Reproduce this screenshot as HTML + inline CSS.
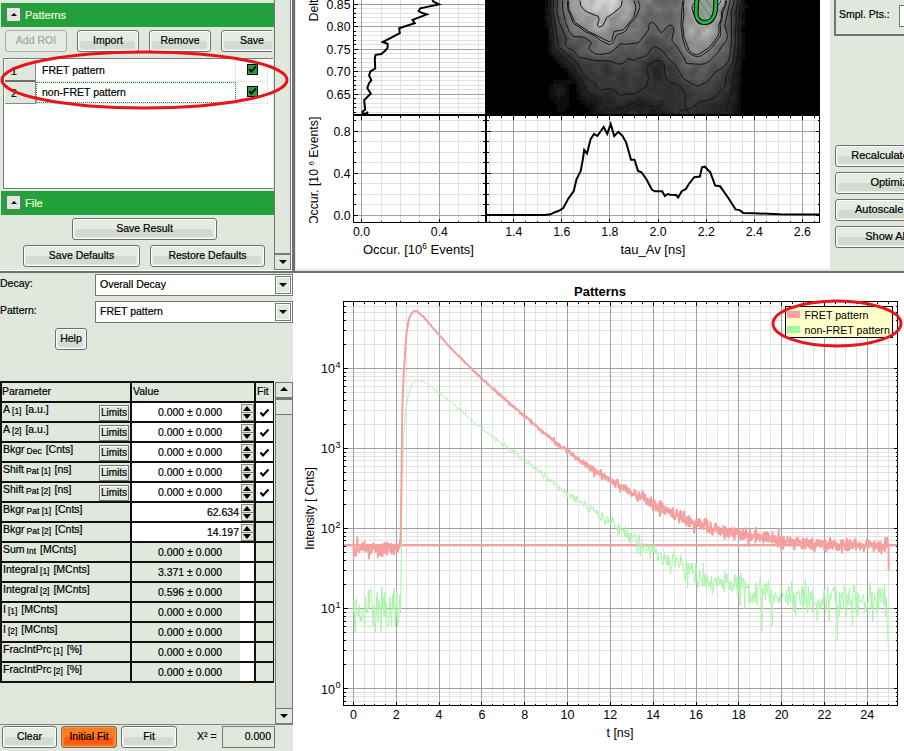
<!DOCTYPE html><html><head><meta charset="utf-8"><style>
*{margin:0;padding:0;box-sizing:border-box}
html,body{width:904px;height:751px;overflow:hidden;background:#fff;font-family:"Liberation Sans",sans-serif;font-size:10.5px;color:#000;-webkit-text-stroke-width:0.2px}
svg text{-webkit-text-stroke-width:0.1px}
.t{position:absolute;white-space:nowrap;line-height:12px}
.btn{position:absolute;border:1px solid #6f6f6f;border-radius:3px;background:#e4ebe2;text-align:center;overflow:hidden;white-space:nowrap;box-shadow:inset 0 0 0 1px #fff}
.btn::before{content:"";position:absolute;left:2px;right:3px;top:48%;bottom:2px;background:#d3dbd1;border-radius:2px}
.btn span{position:relative}
.btn.dis{border-color:#a9b0a8;color:#a0a8a0;box-shadow:none}
.btn.dis::before{display:none}
.btn.or{background:#ff7a1c;box-shadow:inset 0 0 0 1px #ff9a3a}
.btn.or::before{background:#ff5a12}
.sq{position:absolute;border:1px solid #777;background:#e0e8de;box-shadow:inset 1px 1px 0 #fff}
sub{font-size:8.5px;vertical-align:-1px;margin:0 1px 0 2px;line-height:0}
.hdr{position:absolute;background:#21a03c;color:#f4f6b4;font-size:11px}
</style></head><body><div style="position:absolute;left:0px;top:0px;width:292px;height:271px;background:#e0e8de"></div>
<div class="hdr" style="left:1px;top:3px;width:273px;height:24px"></div>
<div style="position:absolute;left:6px;top:7px;width:15px;height:15px;background:#e0e8de;border:1px solid #6f6f6f;border-radius:2px"></div>
<div style="position:absolute;left:10.5px;top:12.5px;width:0;height:0;border-left:3px solid transparent;border-right:3px solid transparent;border-bottom:3px solid #000"></div>
<div class="t" style="left:25px;top:9px;color:#f2f8d6;font-size:11px">Patterns</div>
<div class="btn dis" style="left:5px;top:30px;width:62px;height:22px;line-height:18px;"><span>Add ROI</span></div>
<div class="btn" style="left:77px;top:30px;width:62px;height:22px;line-height:18px;"><span>Import</span></div>
<div class="btn" style="left:149px;top:30px;width:62px;height:22px;line-height:18px;"><span>Remove</span></div>
<div style="position:absolute;left:0;top:0;width:272px;height:60px;overflow:hidden">
<div class="btn" style="left:221px;top:30px;width:62px;height:22px;line-height:18px;"><span>Save</span></div>
</div>
<div style="position:absolute;left:3px;top:58px;width:270px;height:131px;background:#fff;border-top:1px solid #7a7a7a;border-left:1px solid #7a7a7a;border-bottom:1px solid #7a7a7a"></div>
<div style="position:absolute;left:5px;top:60px;width:31px;height:22px;background:#e0e8de;border-right:1px solid #8a8a8a;border-bottom:2px solid #6e6e6e"></div>
<div style="position:absolute;left:5px;top:82px;width:31px;height:22px;background:#e0e8de;border-right:1px solid #8a8a8a;border-bottom:1px solid #8a8a8a"></div>
<div class="t" style="left:11px;top:65px;">1</div>
<div class="t" style="left:11px;top:87px;">2</div>
<div style="position:absolute;left:36px;top:81px;width:232px;height:1px;background:#e6e6e6"></div>
<div style="position:absolute;left:36px;top:103px;width:232px;height:1px;background:#e6e6e6"></div>
<div style="position:absolute;left:235px;top:60px;width:1px;height:44px;background:#e6e6e6"></div>
<div style="position:absolute;left:267px;top:60px;width:1px;height:44px;background:#e6e6e6"></div>
<div style="position:absolute;left:36px;top:82px;width:200px;height:21px;border:1px dotted #1a9a2a"></div>
<div class="t" style="left:42px;top:64px;font-size:10.5px">FRET pattern</div>
<div class="t" style="left:42px;top:86px;font-size:10.5px">non-FRET pattern</div>
<div style="position:absolute;left:247px;top:64px;width:11px;height:11px;background:#21a03c;border:1px solid #000"></div>
<svg style="position:absolute;left:247px;top:64px" width="11" height="11"><path d="M2.2 5.2 L4.3 7.6 L8.8 2.6" stroke="#000" stroke-width="1.8" fill="none"/></svg>
<div style="position:absolute;left:247px;top:86px;width:11px;height:11px;background:#21a03c;border:1px solid #000"></div>
<svg style="position:absolute;left:247px;top:86px" width="11" height="11"><path d="M2.2 5.2 L4.3 7.6 L8.8 2.6" stroke="#000" stroke-width="1.8" fill="none"/></svg>
<div class="hdr" style="left:1px;top:191px;width:273px;height:24px"></div>
<div style="position:absolute;left:6px;top:195px;width:15px;height:15px;background:#e0e8de;border:1px solid #6f6f6f;border-radius:2px"></div>
<div style="position:absolute;left:10.5px;top:200.5px;width:0;height:0;border-left:3px solid transparent;border-right:3px solid transparent;border-bottom:3px solid #000"></div>
<div class="t" style="left:25px;top:197px;color:#f2f8d6;font-size:11px">File</div>
<div class="btn" style="left:72px;top:218px;width:145px;height:22px;line-height:18px;"><span>Save Result</span></div>
<div class="btn" style="left:23px;top:245px;width:117px;height:22px;line-height:18px;"><span>Save Defaults</span></div>
<div class="btn" style="left:150px;top:245px;width:115px;height:22px;line-height:18px;"><span>Restore Defaults</span></div>
<div style="position:absolute;left:274px;top:0px;width:17px;height:271px;background:#e0e8de;border-left:1px solid #777;border-right:1px solid #777"></div>
<div style="position:absolute;left:274px;top:253px;width:17px;height:17px;border:1px solid #777;border-top:2px solid #777"></div>
<div style="position:absolute;left:279px;top:260px;width:0;height:0;border-left:4px solid transparent;border-right:4px solid transparent;border-top:4px solid #000"></div>
<div style="position:absolute;left:291px;top:0px;width:1px;height:272px;background:#fff"></div>
<div style="position:absolute;left:292px;top:0px;width:3px;height:272px;background:#707070"></div>
<div style="position:absolute;left:0px;top:270px;width:292px;height:1px;background:#fff"></div>
<div style="position:absolute;left:0px;top:271px;width:904px;height:2px;background:#707070"></div>
<div style="position:absolute;left:295px;top:0px;width:535px;height:271px;background:#fff;border-left:1px solid #e0e8de;border-bottom:2px solid #e0e8de"></div>
<div style="position:absolute;left:830px;top:0px;width:74px;height:271px;background:#e0e8de"></div>
<div style="position:absolute;left:834px;top:-5px;width:80px;height:41px;border:2px solid #727272"></div>
<div class="t" style="left:839px;top:8px;font-size:10.5px">Smpl. Pts.:</div>
<div style="position:absolute;left:899px;top:5px;width:10px;height:22px;background:#fff;border:1px solid #777"></div>
<div style="position:absolute;left:830px;top:0;width:74px;height:271px;overflow:hidden">
<div class="btn" style="left:5px;top:145px;width:100px;height:22px;line-height:18px;"><span></span></div>
</div>
<div class="t" style="left:851.3px;top:149px;font-size:11px">Recalculate</div>
<div style="position:absolute;left:830px;top:0;width:74px;height:271px;overflow:hidden">
<div class="btn" style="left:5px;top:172px;width:100px;height:22px;line-height:18px;"><span></span></div>
</div>
<div class="t" style="left:870.4px;top:176px;font-size:11px">Optimize</div>
<div style="position:absolute;left:830px;top:0;width:74px;height:271px;overflow:hidden">
<div class="btn" style="left:5px;top:199px;width:100px;height:22px;line-height:18px;"><span></span></div>
</div>
<div class="t" style="left:855px;top:203px;font-size:11px">Autoscale</div>
<div style="position:absolute;left:830px;top:0;width:74px;height:271px;overflow:hidden">
<div class="btn" style="left:5px;top:226px;width:100px;height:22px;line-height:18px;"><span></span></div>
</div>
<div class="t" style="left:865.2px;top:230px;font-size:11px">Show All</div>
<div style="position:absolute;left:0px;top:273px;width:293px;height:478px;background:#e0e8de"></div>
<div class="t" style="left:0px;top:277px;">Decay:</div>
<div class="t" style="left:0px;top:304px;">Pattern:</div>
<div style="position:absolute;left:95px;top:274px;width:198px;height:22px;background:#fff;border:1px solid #777"></div>
<div style="position:absolute;left:275px;top:276px;width:16px;height:18px;background:#e0e8de;border:1px solid #777;box-shadow:inset 1px 1px 0 #fff,inset -1px -1px 0 #fff"></div>
<div style="position:absolute;left:279px;top:283px;width:0;height:0;border-left:4px solid transparent;border-right:4px solid transparent;border-top:4px solid #000"></div>
<div class="t" style="left:100px;top:278px;">Overall Decay</div>
<div style="position:absolute;left:95px;top:301px;width:198px;height:22px;background:#fff;border:1px solid #777"></div>
<div style="position:absolute;left:275px;top:303px;width:16px;height:18px;background:#e0e8de;border:1px solid #777;box-shadow:inset 1px 1px 0 #fff,inset -1px -1px 0 #fff"></div>
<div style="position:absolute;left:279px;top:310px;width:0;height:0;border-left:4px solid transparent;border-right:4px solid transparent;border-top:4px solid #000"></div>
<div class="t" style="left:100px;top:305px;">FRET pattern</div>
<div class="btn" style="left:55px;top:328px;width:32px;height:22px;line-height:18px;"><span>Help</span></div>
<div style="position:absolute;left:0px;top:382px;width:274px;height:20px;background:#e0e8de"></div>
<div class="t" style="left:2px;top:385px;">Parameter</div>
<div class="t" style="left:133px;top:385px;">Value</div>
<div class="t" style="left:257px;top:385px;">Fit</div>
<div style="position:absolute;left:0px;top:402px;width:131px;height:20px;background:#e0e8de"></div>
<div class="t" style="left:3px;top:403px;line-height:13px">A<sub>[1]</sub> [a.u.]</div>
<div class="sq" style="left:99px;top:405px;width:30px;height:16px;line-height:14px;text-align:center;font-size:10px">Limits</div>
<div style="position:absolute;left:131px;top:402px;width:123px;height:20px;background:#fff"></div>
<div class="t" style="left:131px;top:406px;width:118px;text-align:center">0.000 ± 0.000</div>
<div style="position:absolute;left:241px;top:404px;width:13px;height:17px;background:#e0e8de;border:1px solid #888"></div>
<div style="position:absolute;left:243px;top:406px;width:0;height:0;border-left:4px solid transparent;border-right:4px solid transparent;border-bottom:5px solid #000"></div>
<div style="position:absolute;left:243px;top:414px;width:0;height:0;border-left:4px solid transparent;border-right:4px solid transparent;border-top:5px solid #000"></div>
<div style="position:absolute;left:242px;top:412px;width:11px;height:1px;background:#888"></div>
<div style="position:absolute;left:254px;top:402px;width:20px;height:20px;background:#fff"></div>
<svg style="position:absolute;left:259px;top:407px" width="11" height="11"><path d="M1.5 5.5 L4 8.5 L9.5 2.5" stroke="#000" stroke-width="2" fill="none"/></svg>
<div style="position:absolute;left:0px;top:422px;width:131px;height:20px;background:#e0e8de"></div>
<div class="t" style="left:3px;top:423px;line-height:13px">A<sub>[2]</sub> [a.u.]</div>
<div class="sq" style="left:99px;top:425px;width:30px;height:16px;line-height:14px;text-align:center;font-size:10px">Limits</div>
<div style="position:absolute;left:131px;top:422px;width:123px;height:20px;background:#fff"></div>
<div class="t" style="left:131px;top:426px;width:118px;text-align:center">0.000 ± 0.000</div>
<div style="position:absolute;left:241px;top:424px;width:13px;height:17px;background:#e0e8de;border:1px solid #888"></div>
<div style="position:absolute;left:243px;top:426px;width:0;height:0;border-left:4px solid transparent;border-right:4px solid transparent;border-bottom:5px solid #000"></div>
<div style="position:absolute;left:243px;top:434px;width:0;height:0;border-left:4px solid transparent;border-right:4px solid transparent;border-top:5px solid #000"></div>
<div style="position:absolute;left:242px;top:432px;width:11px;height:1px;background:#888"></div>
<div style="position:absolute;left:254px;top:422px;width:20px;height:20px;background:#fff"></div>
<svg style="position:absolute;left:259px;top:427px" width="11" height="11"><path d="M1.5 5.5 L4 8.5 L9.5 2.5" stroke="#000" stroke-width="2" fill="none"/></svg>
<div style="position:absolute;left:0px;top:442px;width:131px;height:20px;background:#e0e8de"></div>
<div class="t" style="left:3px;top:443px;line-height:13px">Bkgr<sub>Dec</sub> [Cnts]</div>
<div class="sq" style="left:99px;top:445px;width:30px;height:16px;line-height:14px;text-align:center;font-size:10px">Limits</div>
<div style="position:absolute;left:131px;top:442px;width:123px;height:20px;background:#fff"></div>
<div class="t" style="left:131px;top:446px;width:118px;text-align:center">0.000 ± 0.000</div>
<div style="position:absolute;left:241px;top:444px;width:13px;height:17px;background:#e0e8de;border:1px solid #888"></div>
<div style="position:absolute;left:243px;top:446px;width:0;height:0;border-left:4px solid transparent;border-right:4px solid transparent;border-bottom:5px solid #000"></div>
<div style="position:absolute;left:243px;top:454px;width:0;height:0;border-left:4px solid transparent;border-right:4px solid transparent;border-top:5px solid #000"></div>
<div style="position:absolute;left:242px;top:452px;width:11px;height:1px;background:#888"></div>
<div style="position:absolute;left:254px;top:442px;width:20px;height:20px;background:#fff"></div>
<svg style="position:absolute;left:259px;top:447px" width="11" height="11"><path d="M1.5 5.5 L4 8.5 L9.5 2.5" stroke="#000" stroke-width="2" fill="none"/></svg>
<div style="position:absolute;left:0px;top:462px;width:131px;height:20px;background:#e0e8de"></div>
<div class="t" style="left:3px;top:463px;line-height:13px">Shift<sub>Pat [1]</sub> [ns]</div>
<div class="sq" style="left:99px;top:465px;width:30px;height:16px;line-height:14px;text-align:center;font-size:10px">Limits</div>
<div style="position:absolute;left:131px;top:462px;width:123px;height:20px;background:#fff"></div>
<div class="t" style="left:131px;top:466px;width:118px;text-align:center">0.000 ± 0.000</div>
<div style="position:absolute;left:241px;top:464px;width:13px;height:17px;background:#e0e8de;border:1px solid #888"></div>
<div style="position:absolute;left:243px;top:466px;width:0;height:0;border-left:4px solid transparent;border-right:4px solid transparent;border-bottom:5px solid #000"></div>
<div style="position:absolute;left:243px;top:474px;width:0;height:0;border-left:4px solid transparent;border-right:4px solid transparent;border-top:5px solid #000"></div>
<div style="position:absolute;left:242px;top:472px;width:11px;height:1px;background:#888"></div>
<div style="position:absolute;left:254px;top:462px;width:20px;height:20px;background:#fff"></div>
<svg style="position:absolute;left:259px;top:467px" width="11" height="11"><path d="M1.5 5.5 L4 8.5 L9.5 2.5" stroke="#000" stroke-width="2" fill="none"/></svg>
<div style="position:absolute;left:0px;top:482px;width:131px;height:20px;background:#e0e8de"></div>
<div class="t" style="left:3px;top:483px;line-height:13px">Shift<sub>Pat [2]</sub> [ns]</div>
<div class="sq" style="left:99px;top:485px;width:30px;height:16px;line-height:14px;text-align:center;font-size:10px">Limits</div>
<div style="position:absolute;left:131px;top:482px;width:123px;height:20px;background:#fff"></div>
<div class="t" style="left:131px;top:486px;width:118px;text-align:center">0.000 ± 0.000</div>
<div style="position:absolute;left:241px;top:484px;width:13px;height:17px;background:#e0e8de;border:1px solid #888"></div>
<div style="position:absolute;left:243px;top:486px;width:0;height:0;border-left:4px solid transparent;border-right:4px solid transparent;border-bottom:5px solid #000"></div>
<div style="position:absolute;left:243px;top:494px;width:0;height:0;border-left:4px solid transparent;border-right:4px solid transparent;border-top:5px solid #000"></div>
<div style="position:absolute;left:242px;top:492px;width:11px;height:1px;background:#888"></div>
<div style="position:absolute;left:254px;top:482px;width:20px;height:20px;background:#fff"></div>
<svg style="position:absolute;left:259px;top:487px" width="11" height="11"><path d="M1.5 5.5 L4 8.5 L9.5 2.5" stroke="#000" stroke-width="2" fill="none"/></svg>
<div style="position:absolute;left:0px;top:502px;width:131px;height:20px;background:#e0e8de"></div>
<div class="t" style="left:3px;top:503px;line-height:13px">Bkgr<sub>Pat [1]</sub> [Cnts]</div>
<div style="position:absolute;left:131px;top:502px;width:123px;height:20px;background:#fff"></div>
<div class="t" style="left:131px;top:506px;width:108px;text-align:right">62.634</div>
<div style="position:absolute;left:241px;top:504px;width:13px;height:17px;background:#e0e8de;border:1px solid #888"></div>
<div style="position:absolute;left:243px;top:506px;width:0;height:0;border-left:4px solid transparent;border-right:4px solid transparent;border-bottom:5px solid #000"></div>
<div style="position:absolute;left:243px;top:514px;width:0;height:0;border-left:4px solid transparent;border-right:4px solid transparent;border-top:5px solid #000"></div>
<div style="position:absolute;left:242px;top:512px;width:11px;height:1px;background:#888"></div>
<div style="position:absolute;left:254px;top:502px;width:20px;height:20px;background:#e0e8de"></div>
<div style="position:absolute;left:0px;top:522px;width:131px;height:20px;background:#e0e8de"></div>
<div class="t" style="left:3px;top:523px;line-height:13px">Bkgr<sub>Pat [2]</sub> [Cnts]</div>
<div style="position:absolute;left:131px;top:522px;width:123px;height:20px;background:#fff"></div>
<div class="t" style="left:131px;top:526px;width:108px;text-align:right">14.197</div>
<div style="position:absolute;left:241px;top:524px;width:13px;height:17px;background:#e0e8de;border:1px solid #888"></div>
<div style="position:absolute;left:243px;top:526px;width:0;height:0;border-left:4px solid transparent;border-right:4px solid transparent;border-bottom:5px solid #000"></div>
<div style="position:absolute;left:243px;top:534px;width:0;height:0;border-left:4px solid transparent;border-right:4px solid transparent;border-top:5px solid #000"></div>
<div style="position:absolute;left:242px;top:532px;width:11px;height:1px;background:#888"></div>
<div style="position:absolute;left:254px;top:522px;width:20px;height:20px;background:#e0e8de"></div>
<div style="position:absolute;left:0px;top:542px;width:131px;height:20px;background:#e0e8de"></div>
<div class="t" style="left:3px;top:543px;line-height:13px">Sum<sub>Int</sub> [MCnts]</div>
<div style="position:absolute;left:131px;top:542px;width:109px;height:20px;background:#e0e8de"></div>
<div style="position:absolute;left:240px;top:542px;width:14px;height:20px;background:#fff"></div>
<div class="t" style="left:131px;top:546px;width:118px;text-align:center">0.000 ± 0.000</div>
<div style="position:absolute;left:254px;top:542px;width:20px;height:20px;background:#e0e8de"></div>
<div style="position:absolute;left:0px;top:562px;width:131px;height:20px;background:#e0e8de"></div>
<div class="t" style="left:3px;top:563px;line-height:13px">Integral<sub>[1]</sub> [MCnts]</div>
<div style="position:absolute;left:131px;top:562px;width:109px;height:20px;background:#e0e8de"></div>
<div style="position:absolute;left:240px;top:562px;width:14px;height:20px;background:#fff"></div>
<div class="t" style="left:131px;top:566px;width:118px;text-align:center">3.371 ± 0.000</div>
<div style="position:absolute;left:254px;top:562px;width:20px;height:20px;background:#e0e8de"></div>
<div style="position:absolute;left:0px;top:582px;width:131px;height:20px;background:#e0e8de"></div>
<div class="t" style="left:3px;top:583px;line-height:13px">Integral<sub>[2]</sub> [MCnts]</div>
<div style="position:absolute;left:131px;top:582px;width:109px;height:20px;background:#e0e8de"></div>
<div style="position:absolute;left:240px;top:582px;width:14px;height:20px;background:#fff"></div>
<div class="t" style="left:131px;top:586px;width:118px;text-align:center">0.596 ± 0.000</div>
<div style="position:absolute;left:254px;top:582px;width:20px;height:20px;background:#e0e8de"></div>
<div style="position:absolute;left:0px;top:602px;width:131px;height:20px;background:#e0e8de"></div>
<div class="t" style="left:3px;top:603px;line-height:13px">I<sub>[1]</sub> [MCnts]</div>
<div style="position:absolute;left:131px;top:602px;width:109px;height:20px;background:#e0e8de"></div>
<div style="position:absolute;left:240px;top:602px;width:14px;height:20px;background:#fff"></div>
<div class="t" style="left:131px;top:606px;width:118px;text-align:center">0.000 ± 0.000</div>
<div style="position:absolute;left:254px;top:602px;width:20px;height:20px;background:#e0e8de"></div>
<div style="position:absolute;left:0px;top:622px;width:131px;height:20px;background:#e0e8de"></div>
<div class="t" style="left:3px;top:623px;line-height:13px">I<sub>[2]</sub> [MCnts]</div>
<div style="position:absolute;left:131px;top:622px;width:109px;height:20px;background:#e0e8de"></div>
<div style="position:absolute;left:240px;top:622px;width:14px;height:20px;background:#fff"></div>
<div class="t" style="left:131px;top:626px;width:118px;text-align:center">0.000 ± 0.000</div>
<div style="position:absolute;left:254px;top:622px;width:20px;height:20px;background:#e0e8de"></div>
<div style="position:absolute;left:0px;top:642px;width:131px;height:20px;background:#e0e8de"></div>
<div class="t" style="left:3px;top:643px;line-height:13px">FracIntPrc<sub>[1]</sub> [%]</div>
<div style="position:absolute;left:131px;top:642px;width:109px;height:20px;background:#e0e8de"></div>
<div style="position:absolute;left:240px;top:642px;width:14px;height:20px;background:#fff"></div>
<div class="t" style="left:131px;top:646px;width:118px;text-align:center">0.000 ± 0.000</div>
<div style="position:absolute;left:254px;top:642px;width:20px;height:20px;background:#e0e8de"></div>
<div style="position:absolute;left:0px;top:662px;width:131px;height:20px;background:#e0e8de"></div>
<div class="t" style="left:3px;top:663px;line-height:13px">FracIntPrc<sub>[2]</sub> [%]</div>
<div style="position:absolute;left:131px;top:662px;width:109px;height:20px;background:#e0e8de"></div>
<div style="position:absolute;left:240px;top:662px;width:14px;height:20px;background:#fff"></div>
<div class="t" style="left:131px;top:666px;width:118px;text-align:center">0.000 ± 0.000</div>
<div style="position:absolute;left:254px;top:662px;width:20px;height:20px;background:#e0e8de"></div>
<div style="position:absolute;left:0px;top:381px;width:274px;height:2px;background:#111"></div>
<div style="position:absolute;left:0px;top:401px;width:274px;height:2px;background:#111"></div>
<div style="position:absolute;left:0px;top:421px;width:274px;height:2px;background:#111"></div>
<div style="position:absolute;left:0px;top:441px;width:274px;height:2px;background:#111"></div>
<div style="position:absolute;left:0px;top:461px;width:274px;height:2px;background:#111"></div>
<div style="position:absolute;left:0px;top:481px;width:274px;height:2px;background:#111"></div>
<div style="position:absolute;left:0px;top:501px;width:274px;height:2px;background:#111"></div>
<div style="position:absolute;left:0px;top:521px;width:274px;height:2px;background:#111"></div>
<div style="position:absolute;left:0px;top:541px;width:274px;height:2px;background:#111"></div>
<div style="position:absolute;left:0px;top:561px;width:274px;height:2px;background:#111"></div>
<div style="position:absolute;left:0px;top:581px;width:274px;height:2px;background:#111"></div>
<div style="position:absolute;left:0px;top:601px;width:274px;height:2px;background:#111"></div>
<div style="position:absolute;left:0px;top:621px;width:274px;height:2px;background:#111"></div>
<div style="position:absolute;left:0px;top:641px;width:274px;height:2px;background:#111"></div>
<div style="position:absolute;left:0px;top:661px;width:274px;height:2px;background:#111"></div>
<div style="position:absolute;left:0px;top:681px;width:274px;height:2px;background:#111"></div>
<div style="position:absolute;left:0px;top:381px;width:2px;height:302px;background:#111"></div>
<div style="position:absolute;left:130px;top:381px;width:2px;height:302px;background:#111"></div>
<div style="position:absolute;left:254px;top:381px;width:2px;height:302px;background:#111"></div>
<div style="position:absolute;left:273px;top:381px;width:1px;height:302px;background:#111"></div>
<div style="position:absolute;left:275px;top:382px;width:18px;height:342px;background:#d6ddd4;border:1px solid #777"></div>
<div style="position:absolute;left:275px;top:382px;width:18px;height:16px;background:#e0e8de;border:1px solid #777"></div>
<div style="position:absolute;left:280px;top:387px;width:0;height:0;border-left:4px solid transparent;border-right:4px solid transparent;border-bottom:4px solid #000"></div>
<div style="position:absolute;left:275px;top:398px;width:18px;height:17px;background:#e0e8de;border:1px solid #777;border-top:2px solid #777"></div>
<div style="position:absolute;left:275px;top:708px;width:18px;height:16px;background:#e0e8de;border:1px solid #777"></div>
<div style="position:absolute;left:280px;top:714px;width:0;height:0;border-left:4px solid transparent;border-right:4px solid transparent;border-top:4px solid #000"></div>
<div style="position:absolute;left:0px;top:724px;width:293px;height:1px;background:#808080"></div>
<div class="btn" style="left:2px;top:726px;width:55px;height:22px;line-height:18px;"><span>Clear</span></div>
<div class="btn or" style="left:61px;top:726px;width:56px;height:22px;line-height:18px;"><span>Initial Fit</span></div>
<div class="btn" style="left:121px;top:726px;width:56px;height:22px;line-height:18px;"><span>Fit</span></div>
<div class="t" style="left:197px;top:730px;">X² =</div>
<div style="position:absolute;left:222px;top:726px;width:53px;height:22px;background:#e0e8de;border:1px solid #777"></div>
<div class="t" style="left:222px;top:730px;width:49px;text-align:right">0.000</div>
<div style="position:absolute;left:293px;top:273px;width:611px;height:478px;background:#fff"></div>
<svg style="position:absolute;left:293px;top:273px" width="611" height="478" viewBox="293 273 611 478">
<g shape-rendering="crispEdges">
<line x1="364.1" y1="301.5" x2="364.1" y2="705.5" stroke="#e2e2e2" stroke-width="1"/>
<line x1="374.8" y1="301.5" x2="374.8" y2="705.5" stroke="#e2e2e2" stroke-width="1"/>
<line x1="385.5" y1="301.5" x2="385.5" y2="705.5" stroke="#e2e2e2" stroke-width="1"/>
<line x1="406.9" y1="301.5" x2="406.9" y2="705.5" stroke="#e2e2e2" stroke-width="1"/>
<line x1="417.6" y1="301.5" x2="417.6" y2="705.5" stroke="#e2e2e2" stroke-width="1"/>
<line x1="428.3" y1="301.5" x2="428.3" y2="705.5" stroke="#e2e2e2" stroke-width="1"/>
<line x1="449.7" y1="301.5" x2="449.7" y2="705.5" stroke="#e2e2e2" stroke-width="1"/>
<line x1="460.4" y1="301.5" x2="460.4" y2="705.5" stroke="#e2e2e2" stroke-width="1"/>
<line x1="471.2" y1="301.5" x2="471.2" y2="705.5" stroke="#e2e2e2" stroke-width="1"/>
<line x1="492.6" y1="301.5" x2="492.6" y2="705.5" stroke="#e2e2e2" stroke-width="1"/>
<line x1="503.3" y1="301.5" x2="503.3" y2="705.5" stroke="#e2e2e2" stroke-width="1"/>
<line x1="514" y1="301.5" x2="514" y2="705.5" stroke="#e2e2e2" stroke-width="1"/>
<line x1="535.4" y1="301.5" x2="535.4" y2="705.5" stroke="#e2e2e2" stroke-width="1"/>
<line x1="546.1" y1="301.5" x2="546.1" y2="705.5" stroke="#e2e2e2" stroke-width="1"/>
<line x1="556.8" y1="301.5" x2="556.8" y2="705.5" stroke="#e2e2e2" stroke-width="1"/>
<line x1="578.2" y1="301.5" x2="578.2" y2="705.5" stroke="#e2e2e2" stroke-width="1"/>
<line x1="588.9" y1="301.5" x2="588.9" y2="705.5" stroke="#e2e2e2" stroke-width="1"/>
<line x1="599.6" y1="301.5" x2="599.6" y2="705.5" stroke="#e2e2e2" stroke-width="1"/>
<line x1="621" y1="301.5" x2="621" y2="705.5" stroke="#e2e2e2" stroke-width="1"/>
<line x1="631.7" y1="301.5" x2="631.7" y2="705.5" stroke="#e2e2e2" stroke-width="1"/>
<line x1="642.4" y1="301.5" x2="642.4" y2="705.5" stroke="#e2e2e2" stroke-width="1"/>
<line x1="663.8" y1="301.5" x2="663.8" y2="705.5" stroke="#e2e2e2" stroke-width="1"/>
<line x1="674.5" y1="301.5" x2="674.5" y2="705.5" stroke="#e2e2e2" stroke-width="1"/>
<line x1="685.3" y1="301.5" x2="685.3" y2="705.5" stroke="#e2e2e2" stroke-width="1"/>
<line x1="706.7" y1="301.5" x2="706.7" y2="705.5" stroke="#e2e2e2" stroke-width="1"/>
<line x1="717.4" y1="301.5" x2="717.4" y2="705.5" stroke="#e2e2e2" stroke-width="1"/>
<line x1="728.1" y1="301.5" x2="728.1" y2="705.5" stroke="#e2e2e2" stroke-width="1"/>
<line x1="749.5" y1="301.5" x2="749.5" y2="705.5" stroke="#e2e2e2" stroke-width="1"/>
<line x1="760.2" y1="301.5" x2="760.2" y2="705.5" stroke="#e2e2e2" stroke-width="1"/>
<line x1="770.9" y1="301.5" x2="770.9" y2="705.5" stroke="#e2e2e2" stroke-width="1"/>
<line x1="792.3" y1="301.5" x2="792.3" y2="705.5" stroke="#e2e2e2" stroke-width="1"/>
<line x1="803" y1="301.5" x2="803" y2="705.5" stroke="#e2e2e2" stroke-width="1"/>
<line x1="813.7" y1="301.5" x2="813.7" y2="705.5" stroke="#e2e2e2" stroke-width="1"/>
<line x1="835.1" y1="301.5" x2="835.1" y2="705.5" stroke="#e2e2e2" stroke-width="1"/>
<line x1="845.8" y1="301.5" x2="845.8" y2="705.5" stroke="#e2e2e2" stroke-width="1"/>
<line x1="856.5" y1="301.5" x2="856.5" y2="705.5" stroke="#e2e2e2" stroke-width="1"/>
<line x1="877.9" y1="301.5" x2="877.9" y2="705.5" stroke="#e2e2e2" stroke-width="1"/>
<line x1="888.6" y1="301.5" x2="888.6" y2="705.5" stroke="#e2e2e2" stroke-width="1"/>
<line x1="343.5" y1="701.1" x2="897.5" y2="701.1" stroke="#e2e2e2" stroke-width="1"/>
<line x1="343.5" y1="696.5" x2="897.5" y2="696.5" stroke="#e2e2e2" stroke-width="1"/>
<line x1="343.5" y1="692.4" x2="897.5" y2="692.4" stroke="#e2e2e2" stroke-width="1"/>
<line x1="343.5" y1="664.6" x2="897.5" y2="664.6" stroke="#e2e2e2" stroke-width="1"/>
<line x1="343.5" y1="650.5" x2="897.5" y2="650.5" stroke="#e2e2e2" stroke-width="1"/>
<line x1="343.5" y1="640.5" x2="897.5" y2="640.5" stroke="#e2e2e2" stroke-width="1"/>
<line x1="343.5" y1="632.7" x2="897.5" y2="632.7" stroke="#e2e2e2" stroke-width="1"/>
<line x1="343.5" y1="626.4" x2="897.5" y2="626.4" stroke="#e2e2e2" stroke-width="1"/>
<line x1="343.5" y1="621" x2="897.5" y2="621" stroke="#e2e2e2" stroke-width="1"/>
<line x1="343.5" y1="616.4" x2="897.5" y2="616.4" stroke="#e2e2e2" stroke-width="1"/>
<line x1="343.5" y1="612.3" x2="897.5" y2="612.3" stroke="#e2e2e2" stroke-width="1"/>
<line x1="343.5" y1="584.5" x2="897.5" y2="584.5" stroke="#e2e2e2" stroke-width="1"/>
<line x1="343.5" y1="570.4" x2="897.5" y2="570.4" stroke="#e2e2e2" stroke-width="1"/>
<line x1="343.5" y1="560.4" x2="897.5" y2="560.4" stroke="#e2e2e2" stroke-width="1"/>
<line x1="343.5" y1="552.6" x2="897.5" y2="552.6" stroke="#e2e2e2" stroke-width="1"/>
<line x1="343.5" y1="546.3" x2="897.5" y2="546.3" stroke="#e2e2e2" stroke-width="1"/>
<line x1="343.5" y1="540.9" x2="897.5" y2="540.9" stroke="#e2e2e2" stroke-width="1"/>
<line x1="343.5" y1="536.3" x2="897.5" y2="536.3" stroke="#e2e2e2" stroke-width="1"/>
<line x1="343.5" y1="532.2" x2="897.5" y2="532.2" stroke="#e2e2e2" stroke-width="1"/>
<line x1="343.5" y1="504.4" x2="897.5" y2="504.4" stroke="#e2e2e2" stroke-width="1"/>
<line x1="343.5" y1="490.3" x2="897.5" y2="490.3" stroke="#e2e2e2" stroke-width="1"/>
<line x1="343.5" y1="480.3" x2="897.5" y2="480.3" stroke="#e2e2e2" stroke-width="1"/>
<line x1="343.5" y1="472.5" x2="897.5" y2="472.5" stroke="#e2e2e2" stroke-width="1"/>
<line x1="343.5" y1="466.2" x2="897.5" y2="466.2" stroke="#e2e2e2" stroke-width="1"/>
<line x1="343.5" y1="460.8" x2="897.5" y2="460.8" stroke="#e2e2e2" stroke-width="1"/>
<line x1="343.5" y1="456.2" x2="897.5" y2="456.2" stroke="#e2e2e2" stroke-width="1"/>
<line x1="343.5" y1="452.1" x2="897.5" y2="452.1" stroke="#e2e2e2" stroke-width="1"/>
<line x1="343.5" y1="424.3" x2="897.5" y2="424.3" stroke="#e2e2e2" stroke-width="1"/>
<line x1="343.5" y1="410.2" x2="897.5" y2="410.2" stroke="#e2e2e2" stroke-width="1"/>
<line x1="343.5" y1="400.2" x2="897.5" y2="400.2" stroke="#e2e2e2" stroke-width="1"/>
<line x1="343.5" y1="392.4" x2="897.5" y2="392.4" stroke="#e2e2e2" stroke-width="1"/>
<line x1="343.5" y1="386.1" x2="897.5" y2="386.1" stroke="#e2e2e2" stroke-width="1"/>
<line x1="343.5" y1="380.7" x2="897.5" y2="380.7" stroke="#e2e2e2" stroke-width="1"/>
<line x1="343.5" y1="376.1" x2="897.5" y2="376.1" stroke="#e2e2e2" stroke-width="1"/>
<line x1="343.5" y1="372" x2="897.5" y2="372" stroke="#e2e2e2" stroke-width="1"/>
<line x1="343.5" y1="344.2" x2="897.5" y2="344.2" stroke="#e2e2e2" stroke-width="1"/>
<line x1="343.5" y1="330.1" x2="897.5" y2="330.1" stroke="#e2e2e2" stroke-width="1"/>
<line x1="343.5" y1="320.1" x2="897.5" y2="320.1" stroke="#e2e2e2" stroke-width="1"/>
<line x1="343.5" y1="312.3" x2="897.5" y2="312.3" stroke="#e2e2e2" stroke-width="1"/>
<line x1="343.5" y1="306" x2="897.5" y2="306" stroke="#e2e2e2" stroke-width="1"/>
<line x1="353.4" y1="301.5" x2="353.4" y2="705.5" stroke="#a0a0a0" stroke-width="1"/>
<line x1="396.2" y1="301.5" x2="396.2" y2="705.5" stroke="#a0a0a0" stroke-width="1"/>
<line x1="439" y1="301.5" x2="439" y2="705.5" stroke="#a0a0a0" stroke-width="1"/>
<line x1="481.9" y1="301.5" x2="481.9" y2="705.5" stroke="#a0a0a0" stroke-width="1"/>
<line x1="524.7" y1="301.5" x2="524.7" y2="705.5" stroke="#a0a0a0" stroke-width="1"/>
<line x1="567.5" y1="301.5" x2="567.5" y2="705.5" stroke="#a0a0a0" stroke-width="1"/>
<line x1="610.3" y1="301.5" x2="610.3" y2="705.5" stroke="#a0a0a0" stroke-width="1"/>
<line x1="653.1" y1="301.5" x2="653.1" y2="705.5" stroke="#a0a0a0" stroke-width="1"/>
<line x1="696" y1="301.5" x2="696" y2="705.5" stroke="#a0a0a0" stroke-width="1"/>
<line x1="738.8" y1="301.5" x2="738.8" y2="705.5" stroke="#a0a0a0" stroke-width="1"/>
<line x1="781.6" y1="301.5" x2="781.6" y2="705.5" stroke="#a0a0a0" stroke-width="1"/>
<line x1="824.4" y1="301.5" x2="824.4" y2="705.5" stroke="#a0a0a0" stroke-width="1"/>
<line x1="867.2" y1="301.5" x2="867.2" y2="705.5" stroke="#a0a0a0" stroke-width="1"/>
<line x1="343.5" y1="688.7" x2="897.5" y2="688.7" stroke="#a0a0a0" stroke-width="1"/>
<line x1="343.5" y1="608.6" x2="897.5" y2="608.6" stroke="#a0a0a0" stroke-width="1"/>
<line x1="343.5" y1="528.5" x2="897.5" y2="528.5" stroke="#a0a0a0" stroke-width="1"/>
<line x1="343.5" y1="448.4" x2="897.5" y2="448.4" stroke="#a0a0a0" stroke-width="1"/>
<line x1="343.5" y1="368.3" x2="897.5" y2="368.3" stroke="#a0a0a0" stroke-width="1"/>
<line x1="343.5" y1="701.1" x2="345.5" y2="701.1" stroke="#000"/>
<line x1="897.5" y1="701.1" x2="895.5" y2="701.1" stroke="#000"/>
<line x1="343.5" y1="696.5" x2="345.5" y2="696.5" stroke="#000"/>
<line x1="897.5" y1="696.5" x2="895.5" y2="696.5" stroke="#000"/>
<line x1="343.5" y1="692.4" x2="345.5" y2="692.4" stroke="#000"/>
<line x1="897.5" y1="692.4" x2="895.5" y2="692.4" stroke="#000"/>
<line x1="343.5" y1="688.7" x2="347.5" y2="688.7" stroke="#000"/>
<line x1="897.5" y1="688.7" x2="893.5" y2="688.7" stroke="#000"/>
<line x1="343.5" y1="664.6" x2="345.5" y2="664.6" stroke="#000"/>
<line x1="897.5" y1="664.6" x2="895.5" y2="664.6" stroke="#000"/>
<line x1="343.5" y1="650.5" x2="345.5" y2="650.5" stroke="#000"/>
<line x1="897.5" y1="650.5" x2="895.5" y2="650.5" stroke="#000"/>
<line x1="343.5" y1="640.5" x2="345.5" y2="640.5" stroke="#000"/>
<line x1="897.5" y1="640.5" x2="895.5" y2="640.5" stroke="#000"/>
<line x1="343.5" y1="632.7" x2="345.5" y2="632.7" stroke="#000"/>
<line x1="897.5" y1="632.7" x2="895.5" y2="632.7" stroke="#000"/>
<line x1="343.5" y1="626.4" x2="345.5" y2="626.4" stroke="#000"/>
<line x1="897.5" y1="626.4" x2="895.5" y2="626.4" stroke="#000"/>
<line x1="343.5" y1="621" x2="345.5" y2="621" stroke="#000"/>
<line x1="897.5" y1="621" x2="895.5" y2="621" stroke="#000"/>
<line x1="343.5" y1="616.4" x2="345.5" y2="616.4" stroke="#000"/>
<line x1="897.5" y1="616.4" x2="895.5" y2="616.4" stroke="#000"/>
<line x1="343.5" y1="612.3" x2="345.5" y2="612.3" stroke="#000"/>
<line x1="897.5" y1="612.3" x2="895.5" y2="612.3" stroke="#000"/>
<line x1="343.5" y1="608.6" x2="347.5" y2="608.6" stroke="#000"/>
<line x1="897.5" y1="608.6" x2="893.5" y2="608.6" stroke="#000"/>
<line x1="343.5" y1="584.5" x2="345.5" y2="584.5" stroke="#000"/>
<line x1="897.5" y1="584.5" x2="895.5" y2="584.5" stroke="#000"/>
<line x1="343.5" y1="570.4" x2="345.5" y2="570.4" stroke="#000"/>
<line x1="897.5" y1="570.4" x2="895.5" y2="570.4" stroke="#000"/>
<line x1="343.5" y1="560.4" x2="345.5" y2="560.4" stroke="#000"/>
<line x1="897.5" y1="560.4" x2="895.5" y2="560.4" stroke="#000"/>
<line x1="343.5" y1="552.6" x2="345.5" y2="552.6" stroke="#000"/>
<line x1="897.5" y1="552.6" x2="895.5" y2="552.6" stroke="#000"/>
<line x1="343.5" y1="546.3" x2="345.5" y2="546.3" stroke="#000"/>
<line x1="897.5" y1="546.3" x2="895.5" y2="546.3" stroke="#000"/>
<line x1="343.5" y1="540.9" x2="345.5" y2="540.9" stroke="#000"/>
<line x1="897.5" y1="540.9" x2="895.5" y2="540.9" stroke="#000"/>
<line x1="343.5" y1="536.3" x2="345.5" y2="536.3" stroke="#000"/>
<line x1="897.5" y1="536.3" x2="895.5" y2="536.3" stroke="#000"/>
<line x1="343.5" y1="532.2" x2="345.5" y2="532.2" stroke="#000"/>
<line x1="897.5" y1="532.2" x2="895.5" y2="532.2" stroke="#000"/>
<line x1="343.5" y1="528.5" x2="347.5" y2="528.5" stroke="#000"/>
<line x1="897.5" y1="528.5" x2="893.5" y2="528.5" stroke="#000"/>
<line x1="343.5" y1="504.4" x2="345.5" y2="504.4" stroke="#000"/>
<line x1="897.5" y1="504.4" x2="895.5" y2="504.4" stroke="#000"/>
<line x1="343.5" y1="490.3" x2="345.5" y2="490.3" stroke="#000"/>
<line x1="897.5" y1="490.3" x2="895.5" y2="490.3" stroke="#000"/>
<line x1="343.5" y1="480.3" x2="345.5" y2="480.3" stroke="#000"/>
<line x1="897.5" y1="480.3" x2="895.5" y2="480.3" stroke="#000"/>
<line x1="343.5" y1="472.5" x2="345.5" y2="472.5" stroke="#000"/>
<line x1="897.5" y1="472.5" x2="895.5" y2="472.5" stroke="#000"/>
<line x1="343.5" y1="466.2" x2="345.5" y2="466.2" stroke="#000"/>
<line x1="897.5" y1="466.2" x2="895.5" y2="466.2" stroke="#000"/>
<line x1="343.5" y1="460.8" x2="345.5" y2="460.8" stroke="#000"/>
<line x1="897.5" y1="460.8" x2="895.5" y2="460.8" stroke="#000"/>
<line x1="343.5" y1="456.2" x2="345.5" y2="456.2" stroke="#000"/>
<line x1="897.5" y1="456.2" x2="895.5" y2="456.2" stroke="#000"/>
<line x1="343.5" y1="452.1" x2="345.5" y2="452.1" stroke="#000"/>
<line x1="897.5" y1="452.1" x2="895.5" y2="452.1" stroke="#000"/>
<line x1="343.5" y1="448.4" x2="347.5" y2="448.4" stroke="#000"/>
<line x1="897.5" y1="448.4" x2="893.5" y2="448.4" stroke="#000"/>
<line x1="343.5" y1="424.3" x2="345.5" y2="424.3" stroke="#000"/>
<line x1="897.5" y1="424.3" x2="895.5" y2="424.3" stroke="#000"/>
<line x1="343.5" y1="410.2" x2="345.5" y2="410.2" stroke="#000"/>
<line x1="897.5" y1="410.2" x2="895.5" y2="410.2" stroke="#000"/>
<line x1="343.5" y1="400.2" x2="345.5" y2="400.2" stroke="#000"/>
<line x1="897.5" y1="400.2" x2="895.5" y2="400.2" stroke="#000"/>
<line x1="343.5" y1="392.4" x2="345.5" y2="392.4" stroke="#000"/>
<line x1="897.5" y1="392.4" x2="895.5" y2="392.4" stroke="#000"/>
<line x1="343.5" y1="386.1" x2="345.5" y2="386.1" stroke="#000"/>
<line x1="897.5" y1="386.1" x2="895.5" y2="386.1" stroke="#000"/>
<line x1="343.5" y1="380.7" x2="345.5" y2="380.7" stroke="#000"/>
<line x1="897.5" y1="380.7" x2="895.5" y2="380.7" stroke="#000"/>
<line x1="343.5" y1="376.1" x2="345.5" y2="376.1" stroke="#000"/>
<line x1="897.5" y1="376.1" x2="895.5" y2="376.1" stroke="#000"/>
<line x1="343.5" y1="372" x2="345.5" y2="372" stroke="#000"/>
<line x1="897.5" y1="372" x2="895.5" y2="372" stroke="#000"/>
<line x1="343.5" y1="368.3" x2="347.5" y2="368.3" stroke="#000"/>
<line x1="897.5" y1="368.3" x2="893.5" y2="368.3" stroke="#000"/>
<line x1="343.5" y1="344.2" x2="345.5" y2="344.2" stroke="#000"/>
<line x1="897.5" y1="344.2" x2="895.5" y2="344.2" stroke="#000"/>
<line x1="343.5" y1="330.1" x2="345.5" y2="330.1" stroke="#000"/>
<line x1="897.5" y1="330.1" x2="895.5" y2="330.1" stroke="#000"/>
<line x1="343.5" y1="320.1" x2="345.5" y2="320.1" stroke="#000"/>
<line x1="897.5" y1="320.1" x2="895.5" y2="320.1" stroke="#000"/>
<line x1="343.5" y1="312.3" x2="345.5" y2="312.3" stroke="#000"/>
<line x1="897.5" y1="312.3" x2="895.5" y2="312.3" stroke="#000"/>
<line x1="343.5" y1="306" x2="345.5" y2="306" stroke="#000"/>
<line x1="897.5" y1="306" x2="895.5" y2="306" stroke="#000"/>
<line x1="353.4" y1="705.5" x2="353.4" y2="701.5" stroke="#000"/>
<line x1="353.4" y1="301.5" x2="353.4" y2="305.5" stroke="#000"/>
<line x1="364.1" y1="705.5" x2="364.1" y2="703.5" stroke="#000"/>
<line x1="364.1" y1="301.5" x2="364.1" y2="303.5" stroke="#000"/>
<line x1="374.8" y1="705.5" x2="374.8" y2="703.5" stroke="#000"/>
<line x1="374.8" y1="301.5" x2="374.8" y2="303.5" stroke="#000"/>
<line x1="385.5" y1="705.5" x2="385.5" y2="703.5" stroke="#000"/>
<line x1="385.5" y1="301.5" x2="385.5" y2="303.5" stroke="#000"/>
<line x1="396.2" y1="705.5" x2="396.2" y2="701.5" stroke="#000"/>
<line x1="396.2" y1="301.5" x2="396.2" y2="305.5" stroke="#000"/>
<line x1="406.9" y1="705.5" x2="406.9" y2="703.5" stroke="#000"/>
<line x1="406.9" y1="301.5" x2="406.9" y2="303.5" stroke="#000"/>
<line x1="417.6" y1="705.5" x2="417.6" y2="703.5" stroke="#000"/>
<line x1="417.6" y1="301.5" x2="417.6" y2="303.5" stroke="#000"/>
<line x1="428.3" y1="705.5" x2="428.3" y2="703.5" stroke="#000"/>
<line x1="428.3" y1="301.5" x2="428.3" y2="303.5" stroke="#000"/>
<line x1="439" y1="705.5" x2="439" y2="701.5" stroke="#000"/>
<line x1="439" y1="301.5" x2="439" y2="305.5" stroke="#000"/>
<line x1="449.7" y1="705.5" x2="449.7" y2="703.5" stroke="#000"/>
<line x1="449.7" y1="301.5" x2="449.7" y2="303.5" stroke="#000"/>
<line x1="460.4" y1="705.5" x2="460.4" y2="703.5" stroke="#000"/>
<line x1="460.4" y1="301.5" x2="460.4" y2="303.5" stroke="#000"/>
<line x1="471.2" y1="705.5" x2="471.2" y2="703.5" stroke="#000"/>
<line x1="471.2" y1="301.5" x2="471.2" y2="303.5" stroke="#000"/>
<line x1="481.9" y1="705.5" x2="481.9" y2="701.5" stroke="#000"/>
<line x1="481.9" y1="301.5" x2="481.9" y2="305.5" stroke="#000"/>
<line x1="492.6" y1="705.5" x2="492.6" y2="703.5" stroke="#000"/>
<line x1="492.6" y1="301.5" x2="492.6" y2="303.5" stroke="#000"/>
<line x1="503.3" y1="705.5" x2="503.3" y2="703.5" stroke="#000"/>
<line x1="503.3" y1="301.5" x2="503.3" y2="303.5" stroke="#000"/>
<line x1="514" y1="705.5" x2="514" y2="703.5" stroke="#000"/>
<line x1="514" y1="301.5" x2="514" y2="303.5" stroke="#000"/>
<line x1="524.7" y1="705.5" x2="524.7" y2="701.5" stroke="#000"/>
<line x1="524.7" y1="301.5" x2="524.7" y2="305.5" stroke="#000"/>
<line x1="535.4" y1="705.5" x2="535.4" y2="703.5" stroke="#000"/>
<line x1="535.4" y1="301.5" x2="535.4" y2="303.5" stroke="#000"/>
<line x1="546.1" y1="705.5" x2="546.1" y2="703.5" stroke="#000"/>
<line x1="546.1" y1="301.5" x2="546.1" y2="303.5" stroke="#000"/>
<line x1="556.8" y1="705.5" x2="556.8" y2="703.5" stroke="#000"/>
<line x1="556.8" y1="301.5" x2="556.8" y2="303.5" stroke="#000"/>
<line x1="567.5" y1="705.5" x2="567.5" y2="701.5" stroke="#000"/>
<line x1="567.5" y1="301.5" x2="567.5" y2="305.5" stroke="#000"/>
<line x1="578.2" y1="705.5" x2="578.2" y2="703.5" stroke="#000"/>
<line x1="578.2" y1="301.5" x2="578.2" y2="303.5" stroke="#000"/>
<line x1="588.9" y1="705.5" x2="588.9" y2="703.5" stroke="#000"/>
<line x1="588.9" y1="301.5" x2="588.9" y2="303.5" stroke="#000"/>
<line x1="599.6" y1="705.5" x2="599.6" y2="703.5" stroke="#000"/>
<line x1="599.6" y1="301.5" x2="599.6" y2="303.5" stroke="#000"/>
<line x1="610.3" y1="705.5" x2="610.3" y2="701.5" stroke="#000"/>
<line x1="610.3" y1="301.5" x2="610.3" y2="305.5" stroke="#000"/>
<line x1="621" y1="705.5" x2="621" y2="703.5" stroke="#000"/>
<line x1="621" y1="301.5" x2="621" y2="303.5" stroke="#000"/>
<line x1="631.7" y1="705.5" x2="631.7" y2="703.5" stroke="#000"/>
<line x1="631.7" y1="301.5" x2="631.7" y2="303.5" stroke="#000"/>
<line x1="642.4" y1="705.5" x2="642.4" y2="703.5" stroke="#000"/>
<line x1="642.4" y1="301.5" x2="642.4" y2="303.5" stroke="#000"/>
<line x1="653.1" y1="705.5" x2="653.1" y2="701.5" stroke="#000"/>
<line x1="653.1" y1="301.5" x2="653.1" y2="305.5" stroke="#000"/>
<line x1="663.8" y1="705.5" x2="663.8" y2="703.5" stroke="#000"/>
<line x1="663.8" y1="301.5" x2="663.8" y2="303.5" stroke="#000"/>
<line x1="674.5" y1="705.5" x2="674.5" y2="703.5" stroke="#000"/>
<line x1="674.5" y1="301.5" x2="674.5" y2="303.5" stroke="#000"/>
<line x1="685.3" y1="705.5" x2="685.3" y2="703.5" stroke="#000"/>
<line x1="685.3" y1="301.5" x2="685.3" y2="303.5" stroke="#000"/>
<line x1="696" y1="705.5" x2="696" y2="701.5" stroke="#000"/>
<line x1="696" y1="301.5" x2="696" y2="305.5" stroke="#000"/>
<line x1="706.7" y1="705.5" x2="706.7" y2="703.5" stroke="#000"/>
<line x1="706.7" y1="301.5" x2="706.7" y2="303.5" stroke="#000"/>
<line x1="717.4" y1="705.5" x2="717.4" y2="703.5" stroke="#000"/>
<line x1="717.4" y1="301.5" x2="717.4" y2="303.5" stroke="#000"/>
<line x1="728.1" y1="705.5" x2="728.1" y2="703.5" stroke="#000"/>
<line x1="728.1" y1="301.5" x2="728.1" y2="303.5" stroke="#000"/>
<line x1="738.8" y1="705.5" x2="738.8" y2="701.5" stroke="#000"/>
<line x1="738.8" y1="301.5" x2="738.8" y2="305.5" stroke="#000"/>
<line x1="749.5" y1="705.5" x2="749.5" y2="703.5" stroke="#000"/>
<line x1="749.5" y1="301.5" x2="749.5" y2="303.5" stroke="#000"/>
<line x1="760.2" y1="705.5" x2="760.2" y2="703.5" stroke="#000"/>
<line x1="760.2" y1="301.5" x2="760.2" y2="303.5" stroke="#000"/>
<line x1="770.9" y1="705.5" x2="770.9" y2="703.5" stroke="#000"/>
<line x1="770.9" y1="301.5" x2="770.9" y2="303.5" stroke="#000"/>
<line x1="781.6" y1="705.5" x2="781.6" y2="701.5" stroke="#000"/>
<line x1="781.6" y1="301.5" x2="781.6" y2="305.5" stroke="#000"/>
<line x1="792.3" y1="705.5" x2="792.3" y2="703.5" stroke="#000"/>
<line x1="792.3" y1="301.5" x2="792.3" y2="303.5" stroke="#000"/>
<line x1="803" y1="705.5" x2="803" y2="703.5" stroke="#000"/>
<line x1="803" y1="301.5" x2="803" y2="303.5" stroke="#000"/>
<line x1="813.7" y1="705.5" x2="813.7" y2="703.5" stroke="#000"/>
<line x1="813.7" y1="301.5" x2="813.7" y2="303.5" stroke="#000"/>
<line x1="824.4" y1="705.5" x2="824.4" y2="701.5" stroke="#000"/>
<line x1="824.4" y1="301.5" x2="824.4" y2="305.5" stroke="#000"/>
<line x1="835.1" y1="705.5" x2="835.1" y2="703.5" stroke="#000"/>
<line x1="835.1" y1="301.5" x2="835.1" y2="303.5" stroke="#000"/>
<line x1="845.8" y1="705.5" x2="845.8" y2="703.5" stroke="#000"/>
<line x1="845.8" y1="301.5" x2="845.8" y2="303.5" stroke="#000"/>
<line x1="856.5" y1="705.5" x2="856.5" y2="703.5" stroke="#000"/>
<line x1="856.5" y1="301.5" x2="856.5" y2="303.5" stroke="#000"/>
<line x1="867.2" y1="705.5" x2="867.2" y2="701.5" stroke="#000"/>
<line x1="867.2" y1="301.5" x2="867.2" y2="305.5" stroke="#000"/>
<line x1="877.9" y1="705.5" x2="877.9" y2="703.5" stroke="#000"/>
<line x1="877.9" y1="301.5" x2="877.9" y2="303.5" stroke="#000"/>
<line x1="888.6" y1="705.5" x2="888.6" y2="703.5" stroke="#000"/>
<line x1="888.6" y1="301.5" x2="888.6" y2="303.5" stroke="#000"/>
</g>
<svg x="343.5" y="301.5" width="554.0" height="404.0" viewBox="343.5 301.5 554.0 404.0" overflow="hidden">
<line x1="343.5" y1="545.1" x2="897.5" y2="545.1" stroke="#f5a0a0" stroke-width="2"/>
<path d="M353.4 612.3L354.1 599.5L354.9 632.7L355.6 621L356.4 599.5L357.1 612.3L357.9 616.4L358.6 616.4L359.4 605.3L360.1 621L360.9 616.4L361.6 621L362.4 608.6L363.1 616.4L363.9 616.4L364.6 626.4L365.4 596.9L366.1 612.3L366.9 608.6L367.6 612.3L368.4 590.1L369.1 608.6L369.9 592.2L370.6 588.2L371.4 599.5L372.1 605.3L372.9 626.4L373.6 605.3L374.4 608.6L375.1 632.7L375.9 621L376.6 596.9L377.4 592.2L378.1 621L378.9 599.5L379.6 608.6L380.4 605.3L381.1 632.7L381.9 586.3L382.6 608.6L383.4 596.9L384.1 616.4L384.9 592.2L385.6 616.4L386.4 602.3L387.1 626.4L387.9 626.4L388.6 626.4L389.4 608.6L390.1 596.9L390.9 612.3L391.6 626.4L392.4 594.5L393.1 608.6L393.9 588.2L394.6 608.6L395.4 626.4L396.1 612.3L396.9 592.2L397.6 626.4L398.4 621L399.1 616.4L399.9 594.5L400.6 612.3L401.4 545.7L402.1 473.2L402.9 456.1L403.6 441L404.4 426.8L405.1 416.9L405.9 410.7L406.6 404.3L407.4 401.5L408.1 396.4L408.9 394.8L409.6 390.9L410.4 388.7L411.1 386.7L411.8 385.1L412.6 384.3L413.3 382.7L414.1 382L414.8 380.9L415.6 379.8L416.3 379.9L417.1 380.2L417.8 380.2L418.6 380.2L419.3 380.6L420.1 380.6L420.8 381.1L421.6 381.9L422.3 381L423.1 381.8L423.8 382.1L424.6 382.6L425.3 383L426.1 383.7L426.8 383.9L427.6 384.3L428.3 384.6L429.1 385.2L429.8 387.3L430.6 385.8L431.3 386.5L432.1 387.3L432.8 388.6L433.6 387.9L434.3 388.7L435.1 390.1L435.8 389.4L436.6 391.5L437.3 391.5L438.1 393.1L438.8 392.2L439.6 393.4L440.3 392.7L441.1 394.8L441.8 395.1L442.6 395.7L443.3 396.5L444.1 397.4L444.8 397.7L445.6 397.6L446.3 398.6L447.1 398.5L447.8 400L448.6 400.7L449.3 401L450.1 401.1L450.8 402.1L451.6 402.6L452.3 403.4L453.1 404.5L453.8 404.2L454.6 404.6L455.3 406.1L456.1 407.1L456.8 407.5L457.6 409.6L458.3 408.3L459.1 408.5L459.8 409L460.6 411L461.3 409.9L462.1 412.1L462.8 411.6L463.6 414L464.3 412.9L465.1 412.4L465.8 415.1L466.6 416.3L467.3 416.1L468.1 417.2L468.8 417.3L469.5 418.7L470.3 419.2L471 420.6L471.8 419.9L472.5 421.3L473.3 421.8L474 423.3L474.8 423.9L475.5 423.7L476.3 424L477 425L477.8 424.4L478.5 426.7L479.3 426L480 426.1L480.8 427.1L481.5 428.2L482.3 425.9L483 429.9L483.8 429.6L484.5 431.1L485.3 432.4L486 431.9L486.8 432.4L487.5 432.2L488.3 434.1L489 433.8L489.8 433.8L490.5 435.5L491.3 436.5L492 437.2L492.8 436L493.5 436.9L494.3 437.1L495 438.1L495.8 441.5L496.5 438.7L497.3 440.1L498 440.1L498.8 441.7L499.5 442.5L500.3 442.1L501 442.8L501.8 445.7L502.5 443.8L503.3 446.2L504 444.8L504.8 443.1L505.5 446.7L506.3 447.3L507 446.1L507.8 446.9L508.5 450.6L509.3 450.9L510 452.4L510.8 451.9L511.5 450.4L512.3 450.6L513 449.5L513.8 453.4L514.5 449.9L515.3 452.4L516 452.2L516.8 453.5L517.5 452.6L518.3 457.2L519 457.7L519.8 457.4L520.5 457.2L521.3 458L522 459.6L522.8 458.7L523.5 459.6L524.3 460.7L525 459.9L525.8 460L526.5 463.9L527.2 462.9L528 464.3L528.7 461.2L529.5 463.2L530.2 463.8L531 465.3L531.7 463.7L532.5 465.7L533.2 468.4L534 466.7L534.7 468.6L535.5 466.5L536.2 468L537 470L537.7 471.4L538.5 472.4L539.2 472.8L540 469.8L540.7 471.3L541.5 471.1L542.2 475.2L543 475.5L543.7 478.5L544.5 472.9L545.2 476.1L546 475.5L546.7 475.5L547.5 477.7L548.2 482.1L549 480.5L549.7 478.8L550.5 481.8L551.2 479.7L552 479.9L552.7 480.4L553.5 482.1L554.2 485.3L555 483.6L555.7 482.8L556.5 484.2L557.2 484.8L558 485.6L558.7 490.1L559.5 487.3L560.2 488.3L561 487.9L561.7 488.8L562.5 491.3L563.2 491.7L564 492.7L564.7 488.3L565.5 489.4L566.2 489L567 497.3L567.7 492.3L568.5 492.8L569.2 493.3L570 495.1L570.7 497.9L571.5 493.9L572.2 497.2L573 494.5L573.7 501.1L574.5 496.3L575.2 496.8L576 502.9L576.7 495.9L577.5 498.8L578.2 500L579 500.1L579.7 502.5L580.5 501.1L581.2 503L582 502.7L582.7 503.7L583.5 506.5L584.2 503.7L584.9 500.6L585.7 505.4L586.4 506.9L587.2 509L587.9 508.4L588.7 508.2L589.4 512.4L590.2 504.6L590.9 506.5L591.7 508.8L592.4 508.4L593.2 506.9L593.9 511.3L594.7 510.9L595.4 510L596.2 513L596.9 513.9L597.7 510L598.4 517.3L599.2 518.3L599.9 517L600.7 521L601.4 517.3L602.2 512.1L602.9 518.1L603.7 519.4L604.4 520.5L605.2 524.9L605.9 519.6L606.7 516.3L607.4 522.7L608.2 522.7L608.9 519.1L609.7 522.7L610.4 523L611.2 518.8L611.9 523L612.7 516.1L613.4 519.4L614.2 524.9L614.9 527.1L615.7 525.2L616.4 529.6L617.2 528.5L617.9 535.8L618.7 523.6L619.4 534.6L620.2 527.1L620.9 528.8L621.7 531L622.4 528.2L623.2 531.8L623.9 529.2L624.7 536.3L625.4 526.8L626.2 537.6L626.9 534.6L627.7 530.3L628.4 540.4L629.2 533.7L629.9 543L630.7 532.6L631.4 532.2L632.2 538L632.9 535.4L633.7 535.4L634.4 535.4L635.2 534.2L635.9 539.9L636.7 544L637.4 554L638.2 542.4L638.9 534.2L639.7 539.9L640.4 556.3L641.2 543.5L641.9 544.6L642.6 553.3L643.4 546.3L644.1 546.3L644.9 546.3L645.6 543.5L646.4 550.6L647.1 549.3L647.9 550.6L648.6 546.3L649.4 544L650.1 558.7L650.9 554L651.6 544.6L652.4 548.1L653.1 552.6L653.9 545.1L654.6 554L655.4 549.9L656.1 548.1L656.9 553.3L657.6 560.4L658.4 560.4L659.1 551.9L659.9 553.3L660.6 554.8L661.4 554L662.1 565L662.9 562.2L663.6 564L664.4 552.6L665.1 559.5L665.9 556.3L666.6 561.3L667.4 566L668.1 554.8L668.9 565L669.6 558.7L670.4 574L671.1 569.2L671.9 567.1L672.6 556.3L673.4 552.6L674.1 559.5L674.9 567.1L675.6 560.4L676.4 556.3L677.1 559.5L677.9 560.4L678.6 568.1L679.4 566L680.1 564L680.9 554.8L681.6 560.4L682.4 564L683.1 568.1L683.9 572.8L684.6 579.6L685.4 581.2L686.1 575.4L686.9 561.3L687.6 588.2L688.4 563.1L689.1 574L689.9 572.8L690.6 564L691.4 569.2L692.1 563.1L692.9 572.8L693.6 570.4L694.4 579.6L695.1 582.8L695.9 563.1L696.6 571.6L697.4 588.2L698.1 582.8L698.9 586.3L699.6 570.4L700.3 578.1L701.1 578.1L701.8 581.2L702.6 586.3L703.3 563.1L704.1 586.3L704.8 574L705.6 579.6L706.3 588.2L707.1 575.4L707.8 584.5L708.6 586.3L709.3 584.5L710.1 581.2L710.8 588.2L711.6 576.7L712.3 594.5L713.1 590.1L713.8 581.2L714.6 578.1L715.3 581.2L716.1 578.1L716.8 586.3L717.6 584.5L718.3 576.7L719.1 579.6L719.8 584.5L720.6 579.6L721.3 579.6L722.1 588.2L722.8 579.6L723.6 586.3L724.3 592.2L725.1 571.6L725.8 582.8L726.6 582.8L727.3 574L728.1 582.8L728.8 581.2L729.6 590.1L730.3 581.2L731.1 588.2L731.8 592.2L732.6 582.8L733.3 590.1L734.1 584.5L734.8 574L735.6 582.8L736.3 588.2L737.1 576.7L737.8 596.9L738.6 588.2L739.3 576.7L740.1 605.3L740.8 572.8L741.6 579.6L742.3 588.2L743.1 578.1L743.8 578.1L744.6 608.6L745.3 581.2L746.1 588.2L746.8 586.3L747.6 588.2L748.3 584.5L749.1 602.3L749.8 592.2L750.6 602.3L751.3 599.5L752.1 594.5L752.8 602.3L753.6 594.5L754.3 592.2L755.1 602.3L755.8 582.8L756.6 594.5L757.3 605.3L758 586.3L758.8 586.3L759.5 586.3L760.3 576.7L761 588.2L761.8 632.7L762.5 588.2L763.3 594.5L764 586.3L764.8 584.5L765.5 599.5L766.3 582.8L767 592.2L767.8 592.2L768.5 579.6L769.3 602.3L770 592.2L770.8 596.9L771.5 590.1L772.3 626.4L773 596.9L773.8 594.5L774.5 602.3L775.3 592.2L776 594.5L776.8 596.9L777.5 599.5L778.3 602.3L779 596.9L779.8 602.3L780.5 594.5L781.3 588.2L782 588.2L782.8 596.9L783.5 594.5L784.3 594.5L785 594.5L785.8 602.3L786.5 590.1L787.3 596.9L788 605.3L788.8 586.3L789.5 590.1L790.3 602.3L791 592.2L791.8 581.2L792.5 605.3L793.3 592.2L794 612.3L794.8 594.5L795.5 616.4L796.3 592.2L797 594.5L797.8 594.5L798.5 590.1L799.3 592.2L800 602.3L800.8 605.3L801.5 592.2L802.3 586.3L803 608.6L803.8 590.1L804.5 605.3L805.3 579.6L806 590.1L806.8 605.3L807.5 612.3L808.3 586.3L809 599.5L809.8 608.6L810.5 592.2L811.3 599.5L812 590.1L812.8 612.3L813.5 594.5L814.3 605.3L815 602.3L815.7 602.3L816.5 602.3L817.2 621L818 602.3L818.7 599.5L819.5 608.6L820.2 602.3L821 608.6L821.7 599.5L822.5 599.5L823.2 605.3L824 590.1L824.7 592.2L825.5 612.3L826.2 608.6L827 596.9L827.7 586.3L828.5 602.3L829.2 621L830 594.5L830.7 599.5L831.5 594.5L832.2 590.1L833 588.2L833.7 590.1L834.5 586.3L835.2 602.3L836 590.1L836.7 608.6L837.5 640.5L838.2 605.3L839 616.4L839.7 592.2L840.5 608.6L841.2 599.5L842 592.2L842.7 594.5L843.5 608.6L844.2 586.3L845 592.2L845.7 596.9L846.5 616.4L847.2 594.5L848 605.3L848.7 594.5L849.5 588.2L850.2 605.3L851 599.5L851.7 605.3L852.5 626.4L853.2 584.5L854 592.2L854.7 586.3L855.5 594.5L856.2 612.3L857 592.2L857.7 616.4L858.5 599.5L859.2 594.5L860 599.5L860.7 602.3L861.5 602.3L862.2 596.9L863 594.5L863.7 594.5L864.5 612.3L865.2 602.3L866 608.6L866.7 612.3L867.5 602.3L868.2 602.3L869 596.9L869.7 582.8L870.5 588.2L871.2 608.6L872 592.2L872.7 621L873.4 608.6L874.2 594.5L874.9 594.5L875.7 602.3L876.4 602.3L877.2 612.3L877.9 588.2L878.7 608.6L879.4 590.1L880.2 588.2L880.9 602.3L881.7 602.3L882.4 588.2L883.2 592.2L883.9 605.3L884.7 584.5L885.4 616.4L886.2 596.9L886.9 612.3L887.7 632.7L888.4 649.3" fill="none" stroke="#a8f5a8" stroke-width="1"/>
<path d="M353.4 541.4L353.8 557.4L354.3 547.1L354.7 550.5L355.1 550.1L355.5 549.3L356 555.6L356.4 549.3L356.8 551.5L357.3 537L357.7 547.7L358.1 549.8L358.5 549.5L359 550.8L359.4 552.2L359.8 549.9L360.3 546.8L360.7 549.4L361.1 545.2L361.5 549.2L362 548.4L362.4 543.1L362.8 546.6L363.2 550.3L363.7 549.2L364.1 546.6L364.5 541.8L365 549.5L365.4 549.4L365.8 545L366.2 551.6L366.7 549.5L367.1 545.5L367.5 546.5L368 548.2L368.4 546.2L368.8 558.4L369.2 545L369.7 551.9L370.1 554.3L370.5 547.6L371 546.1L371.4 550.1L371.8 552.3L372.2 548.4L372.7 548.7L373.1 543.6L373.5 545.9L374 547.9L374.4 544.7L374.8 549.2L375.2 551.7L375.7 546.5L376.1 546.5L376.5 549.3L377 551.2L377.4 547.7L377.8 557.2L378.2 546.1L378.7 546.8L379.1 554.2L379.5 548.3L379.9 551.9L380.4 545.9L380.8 555.6L381.2 551.7L381.7 546.1L382.1 544.5L382.5 556L382.9 550.3L383.4 547.4L383.8 550.6L384.2 543L384.7 552.7L385.1 547.3L385.5 552.2L385.9 543.6L386.4 548.6L386.8 549.8L387.2 554.5L387.7 542.7L388.1 545.9L388.5 545.9L388.9 544.6L389.4 547.3L389.8 550.7L390.2 551.3L390.7 551.3L391.1 543.8L391.5 553.6L391.9 550.6L392.4 549.6L392.8 547.7L393.2 546.5L393.7 552.9L394.1 554.5L394.5 548.5L394.9 544.3L395.4 545.9L395.8 547.8L396.2 549.6L396.6 547.5L397.1 549.4L397.5 545.7L397.9 551.3L398.4 548.1L398.8 548.9L399.2 546.6L399.6 547.7L400.1 539.7L400.5 543.3L400.9 516.9L401.4 484.7L401.8 448.8L402.2 419.2L402.6 398.6L403.1 388.5L403.5 377.6L403.9 370.2L404.4 364.5L404.8 357.5L405.2 350.7L405.6 344.1L406.1 338.4L406.5 333.7L406.9 331.1L407.4 327.9L407.8 325.3L408.2 322.5L408.6 320.7L409.1 318.7L409.5 317.8L409.9 316.6L410.4 316L410.8 314.8L411.2 314.3L411.6 313.9L412.1 313.3L412.5 312.6L412.9 312.4L413.3 312L413.8 311.5L414.2 310.9L414.6 311.2L415.1 311.1L415.5 311.2L415.9 311.3L416.3 311.1L416.8 311.2L417.2 311.6L417.6 311.8L418.1 312.1L418.5 312.4L418.9 313.1L419.3 313.2L419.8 313.5L420.2 314.1L420.6 314.4L421.1 314.9L421.5 315.1L421.9 315.3L422.3 315.9L422.8 316.2L423.2 316.4L423.6 316.9L424.1 317.2L424.5 318.4L424.9 318.3L425.3 319.1L425.8 319.4L426.2 319.8L426.6 320.3L427.1 320.8L427.5 321.5L427.9 321.7L428.3 322.6L428.8 323.1L429.2 323.4L429.6 324.2L430 324.1L430.5 324.8L430.9 325.1L431.3 326L431.8 326.6L432.2 327L432.6 327.3L433 328.1L433.5 328.4L433.9 329L434.3 329.1L434.8 330.1L435.2 330.2L435.6 331.1L436 331.7L436.5 332.1L436.9 332.7L437.3 332.9L437.8 333.1L438.2 333.9L438.6 334.2L439 334.5L439.5 335.3L439.9 335.8L440.3 336.4L440.8 337.3L441.2 337.1L441.6 338.3L442 338.1L442.5 338.8L442.9 339L443.3 339.8L443.8 340.5L444.2 340.6L444.6 341.4L445 341.8L445.5 342.2L445.9 342.7L446.3 343.2L446.7 343.8L447.2 344.1L447.6 345.2L448 345.1L448.5 345.8L448.9 345.6L449.3 346L449.7 347.4L450.2 347.3L450.6 347.8L451 348.5L451.5 348.5L451.9 349.2L452.3 350.1L452.7 350.1L453.2 350.5L453.6 350.9L454 351.7L454.5 351.6L454.9 352L455.3 353L455.7 353.3L456.2 353.6L456.6 354.2L457 353.8L457.5 354.8L457.9 355.6L458.3 356L458.7 356.2L459.2 355.8L459.6 357.1L460 357.4L460.4 357.7L460.9 358.3L461.3 357.9L461.7 359.4L462.2 359.3L462.6 360L463 360.2L463.4 361.3L463.9 360.6L464.3 361.8L464.7 362.1L465.2 362.9L465.6 363.3L466 363.2L466.4 363.4L466.9 364L467.3 364.2L467.7 364.8L468.2 365.5L468.6 365.6L469 366.1L469.4 366.8L469.9 366.9L470.3 367L470.7 367.9L471.2 368.6L471.6 368.5L472 368.4L472.4 369.7L472.9 370.1L473.3 370.5L473.7 370.3L474.2 372.1L474.6 371.5L475 371.6L475.4 372.9L475.9 372.2L476.3 373.1L476.7 374L477.1 374L477.6 375.2L478 375.2L478.4 374.5L478.9 376.2L479.3 375.3L479.7 376.6L480.1 376.5L480.6 377.3L481 378.8L481.4 378.4L481.9 378.5L482.3 379.5L482.7 380L483.1 379.6L483.6 380.5L484 381.4L484.4 381.3L484.9 380.9L485.3 382L485.7 381.7L486.1 381.7L486.6 382.9L487 383.9L487.4 384.4L487.9 384.1L488.3 384L488.7 384.7L489.1 385L489.6 385.9L490 385.9L490.4 386.7L490.9 387L491.3 387.9L491.7 388.5L492.1 388.3L492.6 389L493 389.3L493.4 388.8L493.8 389.6L494.3 388.3L494.7 389.8L495.1 391.1L495.6 390.6L496 391.2L496.4 392.2L496.8 391.6L497.3 393.1L497.7 394.8L498.1 392.9L498.6 394.1L499 393.2L499.4 394.9L499.8 395.6L500.3 394.3L500.7 396.3L501.1 395.9L501.6 395.5L502 396.7L502.4 397.2L502.8 397.5L503.3 397.4L503.7 398.8L504.1 398.3L504.6 398.7L505 397.9L505.4 400L505.8 400.8L506.3 400L506.7 401.2L507.1 401.1L507.6 401.6L508 401.2L508.4 402.8L508.8 402.8L509.3 404.9L509.7 404.1L510.1 402.8L510.5 404.7L511 405.1L511.4 405.8L511.8 404.9L512.3 405.6L512.7 406.9L513.1 406L513.5 406.6L514 406.6L514.4 408L514.8 406.7L515.3 408L515.7 408.8L516.1 409.4L516.5 409.6L517 409.1L517.4 410.3L517.8 409.7L518.3 410.4L518.7 410.2L519.1 411L519.5 412L520 413.8L520.4 412.5L520.8 412.4L521.3 413.3L521.7 413.4L522.1 414.6L522.5 414.8L523 415.7L523.4 414.1L523.8 415.5L524.3 416.4L524.7 417.5L525.1 416.9L525.5 415.9L526 417.1L526.4 418.4L526.8 417L527.2 417.3L527.7 418.1L528.1 418.6L528.5 418.6L529 419.5L529.4 419.7L529.8 421.4L530.2 419.8L530.7 421.3L531.1 420L531.5 424.1L532 421.9L532.4 422L532.8 423.6L533.2 423.3L533.7 423.4L534.1 423.9L534.5 425.3L535 425.3L535.4 424.5L535.8 424.7L536.2 426.1L536.7 426.5L537.1 426.8L537.5 426.3L538 428.7L538.4 429.4L538.8 428.3L539.2 429.9L539.7 429.7L540.1 429.4L540.5 429.4L541 431.3L541.4 429.8L541.8 432.8L542.2 430.8L542.7 433.3L543.1 433.4L543.5 431.7L543.9 433.2L544.4 434L544.8 434L545.2 433.4L545.7 434.3L546.1 434.6L546.5 433.8L546.9 436.1L547.4 436.2L547.8 436.6L548.2 435.1L548.7 435.6L549.1 435.6L549.5 437.5L549.9 438L550.4 437.2L550.8 438.9L551.2 437.9L551.7 438.4L552.1 440.4L552.5 440L552.9 440.4L553.4 438.5L553.8 437.9L554.2 441.4L554.7 441.6L555.1 444.7L555.5 442.1L555.9 442.7L556.4 444.3L556.8 442.4L557.2 445.6L557.7 444.3L558.1 444.2L558.5 446.3L558.9 444L559.4 444L559.8 447.5L560.2 447.9L560.6 445.6L561.1 446.8L561.5 448.6L561.9 447.8L562.4 447.9L562.8 448.2L563.2 447.3L563.6 448.2L564.1 446.7L564.5 447.5L564.9 448.8L565.4 448.5L565.8 448.5L566.2 449.7L566.6 452.6L567.1 450.1L567.5 451.5L567.9 449.7L568.4 452.1L568.8 451.8L569.2 452.4L569.6 450.8L570.1 453.2L570.5 454.2L570.9 453.7L571.4 455.1L571.8 454.5L572.2 455.1L572.6 455L573.1 452.9L573.5 456.6L573.9 456.2L574.4 456.9L574.8 455.9L575.2 459L575.6 458.6L576.1 457.9L576.5 457.3L576.9 458.5L577.3 459.5L577.8 460.4L578.2 458.6L578.6 457.4L579.1 459.5L579.5 460L579.9 459.9L580.3 462.4L580.8 461.7L581.2 461.9L581.6 461.3L582.1 462.1L582.5 464.3L582.9 460.8L583.3 460.2L583.8 463.7L584.2 462.9L584.6 463.4L585.1 462.8L585.5 466.9L585.9 462L586.3 465.8L586.8 463.2L587.2 465.5L587.6 466.6L588.1 466.4L588.5 464.9L588.9 468.3L589.3 467.7L589.8 468.2L590.2 470.6L590.6 465.6L591.1 467.2L591.5 468.5L591.9 466.7L592.3 470.8L592.8 469.5L593.2 466.5L593.6 468.2L594 474.2L594.5 476.5L594.9 472.6L595.3 469.1L595.8 472.2L596.2 472L596.6 470.7L597 473.8L597.5 472L597.9 471.2L598.3 472.1L598.8 472.5L599.2 474.7L599.6 472.8L600 474.9L600.5 471.8L600.9 469.7L601.3 476.3L601.8 479.4L602.2 476.3L602.6 475L603 473.9L603.5 474.1L603.9 478.1L604.3 478.3L604.8 474.5L605.2 479.5L605.6 475.4L606 478.3L606.5 476.5L606.9 476.9L607.3 477L607.8 477.2L608.2 481.2L608.6 478.8L609 479.6L609.5 479.3L609.9 477.6L610.3 481L610.7 482.2L611.2 482.5L611.6 481.9L612 479.9L612.5 483.5L612.9 479.5L613.3 481.6L613.7 483L614.2 485.6L614.6 482.5L615 481.7L615.5 487.3L615.9 481.1L616.3 480.4L616.7 483.5L617.2 483.4L617.6 479.4L618 482.2L618.5 487.2L618.9 485.5L619.3 486.1L619.7 486.3L620.2 491.6L620.6 484.7L621 488.2L621.5 486.6L621.9 487.5L622.3 485.4L622.7 488.4L623.2 489.8L623.6 486.9L624 485.1L624.5 489.4L624.9 485.6L625.3 488.5L625.7 490.6L626.2 486L626.6 491.8L627 487.6L627.4 491.5L627.9 489.4L628.3 493.8L628.7 493L629.2 488.6L629.6 491L630 491.6L630.4 493L630.9 491.1L631.3 495.9L631.7 495.4L632.2 493.3L632.6 495.2L633 495.1L633.4 493.7L633.9 494.1L634.3 494.6L634.7 490L635.2 491.9L635.6 491.5L636 495L636.4 496.5L636.9 499.2L637.3 496.5L637.7 501.3L638.2 497.6L638.6 494.3L639 492.2L639.4 494.2L639.9 499.2L640.3 495.9L640.7 499.5L641.2 495.4L641.6 498.1L642 495.8L642.4 491.3L642.9 496L643.3 492.4L643.7 498.5L644.1 500.1L644.6 495.7L645 494.9L645.4 501.4L645.9 499.8L646.3 504.2L646.7 501L647.1 498.2L647.6 501.1L648 502.7L648.4 505.3L648.9 500.5L649.3 499.5L649.7 500.3L650.1 501.5L650.6 506.1L651 497.5L651.4 503L651.9 503.5L652.3 501.1L652.7 509.8L653.1 503.9L653.6 504.3L654 503L654.4 500.3L654.9 503.1L655.3 510.2L655.7 505.9L656.1 504.5L656.6 504.9L657 509.4L657.4 510.8L657.9 504.3L658.3 505.2L658.7 506.5L659.1 511.9L659.6 501.4L660 516L660.4 508.4L660.8 501L661.3 508.2L661.7 507.2L662.1 511.8L662.6 504.1L663 512.6L663.4 508L663.8 508.5L664.3 512.5L664.7 506.6L665.1 514.1L665.6 512L666 510.1L666.4 511.6L666.8 508.9L667.3 507.7L667.7 511.8L668.1 512.8L668.6 513L669 512.7L669.4 509L669.8 512.6L670.3 510.8L670.7 512.6L671.1 515.3L671.6 509.8L672 516.4L672.4 513.1L672.8 508.3L673.3 517.2L673.7 513.9L674.1 519.3L674.5 515.9L675 519.4L675.4 515.8L675.8 516.6L676.3 514.5L676.7 509.7L677.1 514.4L677.5 513.2L678 515.9L678.4 516.8L678.8 519L679.3 522.6L679.7 516.3L680.1 511L680.5 515.2L681 518.9L681.4 511.5L681.8 518.9L682.3 519.8L682.7 522L683.1 521.3L683.5 519L684 511.4L684.4 519.2L684.8 522.3L685.3 521L685.7 519.8L686.1 525.2L686.5 519L687 517.1L687.4 518.6L687.8 517.8L688.3 524.6L688.7 526.2L689.1 516L689.5 516.8L690 526.1L690.4 520.2L690.8 521L691.2 519.3L691.7 520.7L692.1 523.3L692.5 521L693 521.3L693.4 522.2L693.8 528.6L694.2 532.7L694.7 525.2L695.1 528.3L695.5 521.9L696 520.4L696.4 522.1L696.8 524.5L697.2 523.1L697.7 519.4L698.1 526.1L698.5 520.5L699 521.4L699.4 523.1L699.8 519.1L700.2 526.8L700.7 521.1L701.1 527.8L701.5 527.4L702 528.5L702.4 523.4L702.8 528.4L703.2 525L703.7 529.3L704.1 521.8L704.5 519.2L705 525L705.4 520.2L705.8 524L706.2 518.6L706.7 525.9L707.1 531.8L707.5 521.3L707.9 527.1L708.4 530.4L708.8 529.2L709.2 532.7L709.7 527.7L710.1 531L710.5 522.2L710.9 525.2L711.4 533.4L711.8 533L712.2 529.8L712.7 534.7L713.1 528.5L713.5 528.4L713.9 531L714.4 530.4L714.8 526.8L715.2 523.7L715.7 523.6L716.1 528.8L716.5 526L716.9 531.7L717.4 527.8L717.8 532.7L718.2 526.9L718.7 533.9L719.1 533.1L719.5 529.8L719.9 528L720.4 535L720.8 532L721.2 529.8L721.7 529.5L722.1 533.4L722.5 530.2L722.9 531.6L723.4 525.9L723.8 528.9L724.2 535.6L724.6 538.7L725.1 530.8L725.5 527.2L725.9 530.8L726.4 528.4L726.8 533.3L727.2 536.4L727.6 529.2L728.1 531.5L728.5 529.6L728.9 536.9L729.4 531.5L729.8 534.4L730.2 529.5L730.6 534.5L731.1 534.6L731.5 534.7L731.9 528.3L732.4 532.7L732.8 535.5L733.2 536.6L733.6 536.7L734.1 528.1L734.5 539.6L734.9 536.3L735.4 531.2L735.8 529.4L736.2 534.1L736.6 531L737.1 531.1L737.5 530.4L737.9 533.8L738.4 528.3L738.8 533.4L739.2 528.8L739.6 538L740.1 531L740.5 538.7L740.9 539.6L741.3 532.8L741.8 537.5L742.2 533.1L742.6 538.4L743.1 529.2L743.5 534.8L743.9 538.9L744.3 534.4L744.8 532L745.2 537.8L745.6 533.4L746.1 528.2L746.5 532.3L746.9 535.4L747.3 537.5L747.8 533.5L748.2 540.9L748.6 546.3L749.1 538.1L749.5 539.6L749.9 529.8L750.3 535.5L750.8 539.5L751.2 540.2L751.6 534.4L752.1 539.1L752.5 538.3L752.9 536.7L753.3 536.1L753.8 536.2L754.2 536.2L754.6 532.1L755.1 530.8L755.5 542.5L755.9 527.9L756.3 536.4L756.8 532.6L757.2 539.6L757.6 535.9L758 536.4L758.5 536.8L758.9 534.3L759.3 535.1L759.8 540.9L760.2 537.9L760.6 535L761 535.2L761.5 538.8L761.9 538.7L762.3 538.3L762.8 541.7L763.2 542.4L763.6 532.5L764 539.4L764.5 537.7L764.9 540.7L765.3 533.7L765.8 532.2L766.2 539.1L766.6 536.6L767 541.1L767.5 532.3L767.9 535.3L768.3 541.5L768.8 534.3L769.2 537.5L769.6 537.3L770 537.6L770.5 541.2L770.9 540.8L771.3 536.8L771.8 539.2L772.2 542.4L772.6 532.1L773 540L773.5 541.2L773.9 541.8L774.3 537L774.7 536.1L775.2 538.7L775.6 536.5L776 544.8L776.5 541L776.9 541.4L777.3 539.8L777.7 538.1L778.2 547L778.6 529.1L779 543L779.5 538.8L779.9 537.2L780.3 537.2L780.7 539.4L781.2 550.4L781.6 544.1L782 537.7L782.5 543.6L782.9 544.2L783.3 548.7L783.7 536.4L784.2 538.9L784.6 543.8L785 541.2L785.5 541.2L785.9 544.8L786.3 541.9L786.7 540.1L787.2 539.1L787.6 536.7L788 541.1L788.5 542.8L788.9 539.9L789.3 543.5L789.7 545.7L790.2 537.5L790.6 542.8L791 541.1L791.4 539.3L791.9 545.5L792.3 539.5L792.7 540.2L793.2 542.1L793.6 540.5L794 544.5L794.4 549.6L794.9 543L795.3 545.2L795.7 539.1L796.2 541.2L796.6 544L797 542.1L797.4 537.6L797.9 538.4L798.3 541.1L798.7 540.9L799.2 543.4L799.6 543L800 540.5L800.4 543L800.9 541.6L801.3 546.6L801.7 548.5L802.2 548.7L802.6 544.3L803 538.2L803.4 538.8L803.9 546.4L804.3 548.4L804.7 540.3L805.2 541.5L805.6 547.9L806 539.5L806.4 542.6L806.9 538.6L807.3 542.1L807.7 540.2L808.1 542.2L808.6 546.7L809 544.2L809.4 545.8L809.9 540.6L810.3 547L810.7 548.9L811.1 541.2L811.6 539.7L812 538.7L812.4 539.9L812.9 549L813.3 546.2L813.7 545.7L814.1 543.9L814.6 551.4L815 544L815.4 543L815.9 547.3L816.3 543.6L816.7 539.9L817.1 543.9L817.6 540.4L818 540.6L818.4 542.7L818.9 542.9L819.3 545.5L819.7 539.9L820.1 545.9L820.6 546.7L821 541.9L821.4 546.9L821.9 542.9L822.3 540.7L822.7 544.1L823.1 544.1L823.6 541.2L824 541.8L824.4 549.8L824.8 549.1L825.3 539.9L825.7 543.2L826.1 551.8L826.6 549.2L827 544.5L827.4 548L827.8 543L828.3 544.3L828.7 542.9L829.1 548.7L829.6 542.5L830 537.9L830.4 547.5L830.8 540.1L831.3 541.3L831.7 542.5L832.1 545L832.6 548.8L833 547.8L833.4 542.1L833.8 541.4L834.3 540.6L834.7 541.5L835.1 541.7L835.6 546.4L836 549.1L836.4 544.2L836.8 543.2L837.3 544.6L837.7 550.2L838.1 546.8L838.6 550.1L839 544.5L839.4 548.7L839.8 545.6L840.3 543.9L840.7 544.6L841.1 540.3L841.5 548.9L842 552.7L842.4 541.8L842.8 540.3L843.3 540.2L843.7 544.2L844.1 543.3L844.5 544.8L845 549.7L845.4 547.2L845.8 543.5L846.3 547.2L846.7 538.6L847.1 550.6L847.5 546.8L848 541.4L848.4 547.4L848.8 549.3L849.3 550.1L849.7 547.9L850.1 540.1L850.5 543.9L851 543.6L851.4 547.2L851.8 542.5L852.3 545L852.7 548.6L853.1 547L853.5 544.7L854 541.4L854.4 545.7L854.8 543.7L855.3 538.5L855.7 548.3L856.1 549.8L856.5 542.1L857 544L857.4 545.9L857.8 544.6L858.2 546.7L858.7 543.8L859.1 546.8L859.5 542.8L860 549.7L860.4 548.5L860.8 545.2L861.2 547.3L861.7 543.2L862.1 545.8L862.5 547.6L863 545L863.4 547.5L863.8 551.1L864.2 549.7L864.7 548.5L865.1 547.4L865.5 545.4L866 542.6L866.4 543.8L866.8 539.6L867.2 541.3L867.7 546.4L868.1 540L868.5 541.7L869 547.4L869.4 544.7L869.8 542L870.2 545L870.7 542.3L871.1 544.4L871.5 543.4L872 546.9L872.4 544.5L872.8 547.1L873.2 543.5L873.7 551.7L874.1 544.7L874.5 541.5L874.9 543.8L875.4 546L875.8 544L876.2 548.8L876.7 548.8L877.1 547.1L877.5 546.4L877.9 542.5L878.4 549L878.8 542.4L879.2 551.4L879.7 548.7L880.1 546L880.5 541.9L880.9 548.1L881.4 553.4L881.8 544.5L882.2 546L882.7 549.7L883.1 549.6L883.5 548.4L883.9 545.6L884.4 543.6L884.8 551.1L885.2 538L885.7 546.1L886.1 547.3L886.5 543.6L886.9 545.6L887.4 537.8L887.8 542.2L888.2 547.2L888.6 547.3" fill="none" stroke="#f5a0a0" stroke-width="2" stroke-linejoin="round"/>
<line x1="888.6" y1="545.1" x2="888.6" y2="570.4" stroke="#f5a0a0" stroke-width="2"/>
</svg>
<rect x="343.5" y="301.5" width="554.0" height="404.0" fill="none" stroke="#000" stroke-width="1" shape-rendering="crispEdges"/>
<rect x="785.5" y="306.5" width="107" height="31" fill="#ffffcc" stroke="#000" stroke-width="1" shape-rendering="crispEdges"/>
<rect x="787" y="311" width="13" height="7" fill="#ffa0a0"/>
<rect x="787" y="326" width="13" height="7" fill="#a0f5a0"/>
<text x="804.5" y="318.7" font-size="10.7" font-family="Liberation Sans">FRET pattern</text>
<text x="804.5" y="333.5" font-size="10.7" font-family="Liberation Sans">non-FRET pattern</text>
<text x="353.4" y="719" font-size="12.5" text-anchor="middle" font-family="Liberation Sans">0</text>
<text x="396.2" y="719" font-size="12.5" text-anchor="middle" font-family="Liberation Sans">2</text>
<text x="439" y="719" font-size="12.5" text-anchor="middle" font-family="Liberation Sans">4</text>
<text x="481.9" y="719" font-size="12.5" text-anchor="middle" font-family="Liberation Sans">6</text>
<text x="524.7" y="719" font-size="12.5" text-anchor="middle" font-family="Liberation Sans">8</text>
<text x="567.5" y="719" font-size="12.5" text-anchor="middle" font-family="Liberation Sans">10</text>
<text x="610.3" y="719" font-size="12.5" text-anchor="middle" font-family="Liberation Sans">12</text>
<text x="653.1" y="719" font-size="12.5" text-anchor="middle" font-family="Liberation Sans">14</text>
<text x="696" y="719" font-size="12.5" text-anchor="middle" font-family="Liberation Sans">16</text>
<text x="738.8" y="719" font-size="12.5" text-anchor="middle" font-family="Liberation Sans">18</text>
<text x="781.6" y="719" font-size="12.5" text-anchor="middle" font-family="Liberation Sans">20</text>
<text x="824.4" y="719" font-size="12.5" text-anchor="middle" font-family="Liberation Sans">22</text>
<text x="867.2" y="719" font-size="12.5" text-anchor="middle" font-family="Liberation Sans">24</text>
<text x="335" y="693.5" font-size="12.5" text-anchor="end" font-family="Liberation Sans">10</text>
<text x="335.5" y="688.2" font-size="9" font-family="Liberation Sans">0</text>
<text x="335" y="613.4" font-size="12.5" text-anchor="end" font-family="Liberation Sans">10</text>
<text x="335.5" y="608.1" font-size="9" font-family="Liberation Sans">1</text>
<text x="335" y="533.3" font-size="12.5" text-anchor="end" font-family="Liberation Sans">10</text>
<text x="335.5" y="528" font-size="9" font-family="Liberation Sans">2</text>
<text x="335" y="453.2" font-size="12.5" text-anchor="end" font-family="Liberation Sans">10</text>
<text x="335.5" y="447.9" font-size="9" font-family="Liberation Sans">3</text>
<text x="335" y="373.1" font-size="12.5" text-anchor="end" font-family="Liberation Sans">10</text>
<text x="335.5" y="367.8" font-size="9" font-family="Liberation Sans">4</text>
<text x="620" y="737" font-size="12.5" text-anchor="middle" font-family="Liberation Sans">t [ns]</text>
<text transform="translate(313.5 508.5) rotate(-90)" font-size="12" text-anchor="middle" font-family="Liberation Sans">Intensity [ Cnts]</text>
<text x="600" y="296" font-size="13" font-weight="bold" text-anchor="middle" font-family="Liberation Sans">Patterns</text>
<ellipse cx="837" cy="323.5" rx="64" ry="22.5" fill="none" stroke="#e8141c" stroke-width="3"/>
</svg>
<svg style="position:absolute;left:296px;top:0px" width="534" height="269" viewBox="296 0 534 269">
<g shape-rendering="crispEdges" stroke-width="1">
<line x1="381" y1="0" x2="381" y2="222.5" stroke="#e0e0e0"/>
<line x1="400.4" y1="0" x2="400.4" y2="222.5" stroke="#e0e0e0"/>
<line x1="419.9" y1="0" x2="419.9" y2="222.5" stroke="#e0e0e0"/>
<line x1="458.9" y1="0" x2="458.9" y2="222.5" stroke="#e0e0e0"/>
<line x1="478.4" y1="0" x2="478.4" y2="222.5" stroke="#e0e0e0"/>
<line x1="353.5" y1="112.1" x2="485.5" y2="112.1" stroke="#e0e0e0"/>
<line x1="353.5" y1="107.6" x2="485.5" y2="107.6" stroke="#e0e0e0"/>
<line x1="353.5" y1="103.1" x2="485.5" y2="103.1" stroke="#e0e0e0"/>
<line x1="353.5" y1="98.6" x2="485.5" y2="98.6" stroke="#e0e0e0"/>
<line x1="353.5" y1="89.6" x2="485.5" y2="89.6" stroke="#e0e0e0"/>
<line x1="353.5" y1="85.1" x2="485.5" y2="85.1" stroke="#e0e0e0"/>
<line x1="353.5" y1="80.6" x2="485.5" y2="80.6" stroke="#e0e0e0"/>
<line x1="353.5" y1="76.1" x2="485.5" y2="76.1" stroke="#e0e0e0"/>
<line x1="353.5" y1="67.1" x2="485.5" y2="67.1" stroke="#e0e0e0"/>
<line x1="353.5" y1="62.6" x2="485.5" y2="62.6" stroke="#e0e0e0"/>
<line x1="353.5" y1="58.1" x2="485.5" y2="58.1" stroke="#e0e0e0"/>
<line x1="353.5" y1="53.6" x2="485.5" y2="53.6" stroke="#e0e0e0"/>
<line x1="353.5" y1="44.6" x2="485.5" y2="44.6" stroke="#e0e0e0"/>
<line x1="353.5" y1="40.2" x2="485.5" y2="40.2" stroke="#e0e0e0"/>
<line x1="353.5" y1="35.7" x2="485.5" y2="35.7" stroke="#e0e0e0"/>
<line x1="353.5" y1="31.2" x2="485.5" y2="31.2" stroke="#e0e0e0"/>
<line x1="353.5" y1="22.2" x2="485.5" y2="22.2" stroke="#e0e0e0"/>
<line x1="353.5" y1="17.7" x2="485.5" y2="17.7" stroke="#e0e0e0"/>
<line x1="353.5" y1="13.2" x2="485.5" y2="13.2" stroke="#e0e0e0"/>
<line x1="353.5" y1="8.7" x2="485.5" y2="8.7" stroke="#e0e0e0"/>
<line x1="353.5" y1="204.8" x2="819.5" y2="204.8" stroke="#e0e0e0"/>
<line x1="353.5" y1="194.3" x2="819.5" y2="194.3" stroke="#e0e0e0"/>
<line x1="353.5" y1="183.8" x2="819.5" y2="183.8" stroke="#e0e0e0"/>
<line x1="353.5" y1="162.9" x2="819.5" y2="162.9" stroke="#e0e0e0"/>
<line x1="353.5" y1="152.4" x2="819.5" y2="152.4" stroke="#e0e0e0"/>
<line x1="353.5" y1="141.9" x2="819.5" y2="141.9" stroke="#e0e0e0"/>
<line x1="353.5" y1="120.9" x2="819.5" y2="120.9" stroke="#e0e0e0"/>
<line x1="489.6" y1="115" x2="489.6" y2="222.5" stroke="#e0e0e0"/>
<line x1="501.7" y1="115" x2="501.7" y2="222.5" stroke="#e0e0e0"/>
<line x1="525.7" y1="115" x2="525.7" y2="222.5" stroke="#e0e0e0"/>
<line x1="537.8" y1="115" x2="537.8" y2="222.5" stroke="#e0e0e0"/>
<line x1="549.8" y1="115" x2="549.8" y2="222.5" stroke="#e0e0e0"/>
<line x1="573.9" y1="115" x2="573.9" y2="222.5" stroke="#e0e0e0"/>
<line x1="585.9" y1="115" x2="585.9" y2="222.5" stroke="#e0e0e0"/>
<line x1="597.9" y1="115" x2="597.9" y2="222.5" stroke="#e0e0e0"/>
<line x1="622" y1="115" x2="622" y2="222.5" stroke="#e0e0e0"/>
<line x1="634" y1="115" x2="634" y2="222.5" stroke="#e0e0e0"/>
<line x1="646" y1="115" x2="646" y2="222.5" stroke="#e0e0e0"/>
<line x1="670.1" y1="115" x2="670.1" y2="222.5" stroke="#e0e0e0"/>
<line x1="682.1" y1="115" x2="682.1" y2="222.5" stroke="#e0e0e0"/>
<line x1="694.2" y1="115" x2="694.2" y2="222.5" stroke="#e0e0e0"/>
<line x1="718.2" y1="115" x2="718.2" y2="222.5" stroke="#e0e0e0"/>
<line x1="730.2" y1="115" x2="730.2" y2="222.5" stroke="#e0e0e0"/>
<line x1="742.3" y1="115" x2="742.3" y2="222.5" stroke="#e0e0e0"/>
<line x1="766.3" y1="115" x2="766.3" y2="222.5" stroke="#e0e0e0"/>
<line x1="778.4" y1="115" x2="778.4" y2="222.5" stroke="#e0e0e0"/>
<line x1="790.4" y1="115" x2="790.4" y2="222.5" stroke="#e0e0e0"/>
<line x1="814.5" y1="115" x2="814.5" y2="222.5" stroke="#e0e0e0"/>
<line x1="361.5" y1="0" x2="361.5" y2="222.5" stroke="#a0a0a0"/>
<line x1="439.4" y1="0" x2="439.4" y2="222.5" stroke="#a0a0a0"/>
<line x1="353.5" y1="94.1" x2="485.5" y2="94.1" stroke="#a0a0a0"/>
<line x1="353.5" y1="71.6" x2="485.5" y2="71.6" stroke="#a0a0a0"/>
<line x1="353.5" y1="49.1" x2="485.5" y2="49.1" stroke="#a0a0a0"/>
<line x1="353.5" y1="26.7" x2="485.5" y2="26.7" stroke="#a0a0a0"/>
<line x1="353.5" y1="4.2" x2="485.5" y2="4.2" stroke="#a0a0a0"/>
<line x1="353.5" y1="215.3" x2="819.5" y2="215.3" stroke="#a0a0a0"/>
<line x1="353.5" y1="173.3" x2="819.5" y2="173.3" stroke="#a0a0a0"/>
<line x1="353.5" y1="131.4" x2="819.5" y2="131.4" stroke="#a0a0a0"/>
<line x1="513.7" y1="115" x2="513.7" y2="222.5" stroke="#a0a0a0"/>
<line x1="561.8" y1="115" x2="561.8" y2="222.5" stroke="#a0a0a0"/>
<line x1="609.9" y1="115" x2="609.9" y2="222.5" stroke="#a0a0a0"/>
<line x1="658.1" y1="115" x2="658.1" y2="222.5" stroke="#a0a0a0"/>
<line x1="706.2" y1="115" x2="706.2" y2="222.5" stroke="#a0a0a0"/>
<line x1="754.3" y1="115" x2="754.3" y2="222.5" stroke="#a0a0a0"/>
<line x1="802.4" y1="115" x2="802.4" y2="222.5" stroke="#a0a0a0"/>
</g>
<svg x="485" y="0" width="335" height="116" viewBox="0 0 335 116" overflow="hidden">
<defs><filter id="bl" x="-5%" y="-5%" width="110%" height="110%"><feGaussianBlur stdDeviation="1.3"/></filter></defs>
<rect width="335" height="116" fill="#000"/>
<g filter="url(#bl)" shape-rendering="crispEdges">
<path fill="rgb(6,6,6)" d="M4 -4h4v4h-4zM56 -4h4v4h-4zM260 -4h4v4h-4zM276 -4h4v4h-4zM288 -4h4v4h-4zM300 -4h4v4h-4zM308 -4h4v4h-4zM316 -4h4v4h-4zM4 0h4v4h-4zM56 0h4v4h-4zM260 0h4v4h-4zM276 0h4v4h-4zM288 0h4v4h-4zM300 0h4v4h-4zM308 0h4v4h-4zM316 0h4v4h-4zM8 4h4v4h-4zM16 4h4v4h-4zM44 4h4v4h-4zM284 4h4v4h-4zM48 8h8v4h-8zM260 8h8v4h-8zM-4 12h8v4h-8zM260 12h4v4h-4zM292 12h4v4h-4zM328 12h12v4h-12zM4 16h4v4h-4zM16 16h4v4h-4zM24 16h4v4h-4zM260 16h8v4h-8zM280 16h4v4h-4zM300 16h4v4h-4zM16 20h4v4h-4zM24 20h4v4h-4zM260 20h4v4h-4zM284 20h8v4h-8zM324 20h4v4h-4zM12 24h4v4h-4zM320 24h4v4h-4zM332 24h8v4h-8zM4 28h4v4h-4zM20 28h12v4h-12zM40 28h8v4h-8zM56 28h8v4h-8zM256 28h4v4h-4zM268 28h4v4h-4zM276 28h4v4h-4zM284 28h4v4h-4zM332 28h8v4h-8zM40 32h8v4h-8zM52 32h4v4h-4zM60 32h4v4h-4zM264 32h4v4h-4zM276 32h4v4h-4zM320 32h4v4h-4zM8 36h4v4h-4zM52 36h4v4h-4zM60 36h4v4h-4zM284 36h8v4h-8zM-4 40h8v4h-8zM24 40h4v4h-4zM56 40h8v4h-8zM280 40h4v4h-4zM44 44h4v4h-4zM60 44h4v4h-4zM264 44h8v4h-8zM280 44h4v4h-4zM288 44h4v4h-4zM308 44h4v4h-4zM-4 48h8v4h-8zM12 48h4v4h-4zM56 48h8v4h-8zM264 48h4v4h-4zM288 48h4v4h-4zM296 48h4v4h-4zM324 48h4v4h-4zM36 52h4v4h-4zM48 52h8v4h-8zM60 52h4v4h-4zM288 52h4v4h-4zM300 52h4v4h-4zM316 52h8v4h-8zM20 56h4v4h-4zM28 56h12v4h-12zM60 56h8v4h-8zM284 56h4v4h-4zM304 56h8v4h-8zM16 60h4v4h-4zM24 60h4v4h-4zM40 60h4v4h-4zM56 60h16v4h-16zM256 60h4v4h-4zM280 60h4v4h-4zM328 60h4v4h-4zM8 64h4v4h-4zM44 64h4v4h-4zM56 64h4v4h-4zM68 64h8v4h-8zM256 64h4v4h-4zM276 64h4v4h-4zM292 64h4v4h-4zM316 64h4v4h-4zM324 64h4v4h-4zM16 68h4v4h-4zM68 68h12v4h-12zM256 68h4v4h-4zM268 68h4v4h-4zM284 68h4v4h-4zM308 68h4v4h-4zM320 68h4v4h-4zM32 72h4v4h-4zM56 72h4v4h-4zM64 72h4v4h-4zM76 72h8v4h-8zM256 72h4v4h-4zM272 72h4v4h-4zM284 72h4v4h-4zM292 72h4v4h-4zM304 72h4v4h-4zM24 76h4v4h-4zM40 76h4v4h-4zM64 76h20v4h-20zM256 76h4v4h-4zM324 76h4v4h-4zM-4 80h8v4h-8zM20 80h4v4h-4zM32 80h8v4h-8zM48 80h8v4h-8zM60 80h8v4h-8zM256 80h4v4h-4zM276 80h4v4h-4zM284 80h8v4h-8zM308 80h4v4h-4zM328 80h12v4h-12zM20 84h4v4h-4zM44 84h8v4h-8zM84 84h8v4h-8zM256 84h4v4h-4zM268 84h4v4h-4zM292 84h4v4h-4zM312 84h4v4h-4zM320 84h4v4h-4zM4 88h4v4h-4zM32 88h4v4h-4zM52 88h4v4h-4zM84 88h8v4h-8zM256 88h4v4h-4zM284 88h4v4h-4zM304 88h4v4h-4zM316 88h4v4h-4zM-4 92h8v4h-8zM12 92h4v4h-4zM24 92h4v4h-4zM48 92h16v4h-16zM84 92h8v4h-8zM256 92h4v4h-4zM284 92h4v4h-4zM328 92h4v4h-4zM28 96h4v4h-4zM60 96h4v4h-4zM84 96h8v4h-8zM256 96h4v4h-4zM284 96h4v4h-4zM300 96h8v4h-8zM28 100h4v4h-4zM52 100h4v4h-4zM64 100h4v4h-4zM84 100h12v4h-12zM256 100h4v4h-4zM292 100h4v4h-4zM300 100h4v4h-4zM320 100h4v4h-4zM24 104h4v4h-4zM68 104h4v4h-4zM84 104h16v4h-16zM256 104h4v4h-4zM280 104h4v4h-4zM300 104h4v4h-4zM12 108h4v4h-4zM64 108h8v4h-8zM80 108h12v4h-12zM96 108h8v4h-8zM256 108h4v4h-4zM284 108h4v4h-4zM308 108h4v4h-4zM-4 112h8v4h-8zM28 112h4v4h-4zM48 112h4v4h-4zM64 112h40v4h-40zM256 112h4v4h-4zM264 112h4v4h-4zM288 112h4v4h-4zM312 112h4v4h-4zM324 112h4v4h-4zM-4 116h8v4h-8zM28 116h4v4h-4zM48 116h4v4h-4zM64 116h40v4h-40zM256 116h4v4h-4zM264 116h4v4h-4zM288 116h4v4h-4zM312 116h4v4h-4zM324 116h4v4h-4z"/>
<path fill="rgb(13,13,13)" d="M60 -4h4v4h-4zM60 0h4v4h-4zM60 4h4v4h-4zM260 4h4v4h-4zM60 12h4v4h-4zM256 12h4v4h-4zM256 16h4v4h-4zM60 20h4v4h-4zM60 24h4v4h-4zM256 24h4v4h-4zM256 32h4v4h-4zM256 36h4v4h-4zM256 40h4v4h-4zM256 44h4v4h-4zM256 48h4v4h-4zM64 52h4v4h-4zM256 52h4v4h-4zM68 56h4v4h-4zM256 56h4v4h-4zM72 60h4v4h-4zM80 68h4v4h-4zM252 72h4v4h-4zM84 76h4v4h-4zM68 80h24v4h-24zM64 84h4v4h-4zM80 84h4v4h-4zM252 84h4v4h-4zM64 88h4v4h-4zM80 88h4v4h-4zM252 88h4v4h-4zM64 92h4v4h-4zM80 92h4v4h-4zM92 92h4v4h-4zM252 92h4v4h-4zM64 96h8v4h-8zM76 96h8v4h-8zM92 96h4v4h-4zM252 96h4v4h-4zM68 100h16v4h-16zM96 100h4v4h-4zM252 100h4v4h-4zM72 104h12v4h-12zM100 104h8v4h-8zM252 104h4v4h-4zM72 108h8v4h-8zM104 108h4v4h-4zM252 108h4v4h-4zM104 112h4v4h-4zM252 112h4v4h-4zM104 116h4v4h-4zM252 116h4v4h-4z"/>
<path fill="rgb(19,19,19)" d="M256 -4h4v4h-4zM256 0h4v4h-4zM256 4h4v4h-4zM60 8h4v4h-4zM256 8h4v4h-4zM60 16h4v4h-4zM256 20h4v4h-4zM64 40h4v4h-4zM64 44h4v4h-4zM64 48h4v4h-4zM252 56h4v4h-4zM76 64h4v4h-4zM252 68h4v4h-4zM84 72h4v4h-4zM88 76h4v4h-4zM252 76h4v4h-4zM252 80h4v4h-4zM68 84h12v4h-12zM92 84h4v4h-4zM68 88h4v4h-4zM92 88h4v4h-4zM68 92h4v4h-4zM76 92h4v4h-4zM72 96h4v4h-4zM96 96h4v4h-4zM100 100h12v4h-12zM108 104h4v4h-4zM248 104h4v4h-4zM108 108h4v4h-4zM248 108h4v4h-4zM108 112h8v4h-8zM248 112h4v4h-4zM108 116h8v4h-8zM248 116h4v4h-4z"/>
<path fill="rgb(26,26,26)" d="M64 24h4v4h-4zM64 32h4v4h-4zM64 36h4v4h-4zM252 48h4v4h-4zM68 52h4v4h-4zM252 52h4v4h-4zM72 56h4v4h-4zM76 60h4v4h-4zM252 60h4v4h-4zM80 64h4v4h-4zM252 64h4v4h-4zM84 68h4v4h-4zM88 72h4v4h-4zM248 72h4v4h-4zM248 76h4v4h-4zM92 80h4v4h-4zM248 84h4v4h-4zM72 88h8v4h-8zM96 88h4v4h-4zM248 88h4v4h-4zM72 92h4v4h-4zM96 92h4v4h-4zM248 92h4v4h-4zM100 96h12v4h-12zM248 96h4v4h-4zM112 100h4v4h-4zM244 100h8v4h-8zM152 104h8v4h-8zM244 104h4v4h-4zM112 108h8v4h-8zM164 108h8v4h-8zM116 112h4v4h-4zM164 112h8v4h-8zM116 116h4v4h-4zM164 116h8v4h-8z"/>
<path fill="rgb(32,32,32)" d="M64 4h4v4h-4zM64 12h4v4h-4zM252 12h4v4h-4zM64 16h4v4h-4zM64 20h4v4h-4zM252 24h4v4h-4zM64 28h4v4h-4zM252 28h4v4h-4zM252 32h4v4h-4zM252 36h4v4h-4zM252 44h4v4h-4zM72 52h4v4h-4zM76 56h4v4h-4zM80 60h4v4h-4zM84 64h4v4h-4zM88 68h4v4h-4zM248 68h4v4h-4zM92 76h4v4h-4zM248 80h4v4h-4zM96 84h4v4h-4zM244 88h4v4h-4zM100 92h4v4h-4zM244 92h4v4h-4zM112 96h4v4h-4zM120 100h4v4h-4zM144 100h16v4h-16zM112 104h4v4h-4zM140 104h12v4h-12zM164 104h4v4h-4zM172 104h8v4h-8zM228 104h4v4h-4zM236 104h4v4h-4zM120 108h4v4h-4zM128 108h16v4h-16zM152 108h12v4h-12zM172 108h4v4h-4zM240 108h8v4h-8zM120 112h12v4h-12zM136 112h4v4h-4zM160 112h4v4h-4zM172 112h16v4h-16zM228 112h8v4h-8zM244 112h4v4h-4zM120 116h12v4h-12zM136 116h4v4h-4zM160 116h4v4h-4zM172 116h16v4h-16zM228 116h8v4h-8zM244 116h4v4h-4z"/>
<path fill="rgb(38,38,38)" d="M64 -4h4v4h-4zM64 0h4v4h-4zM64 8h4v4h-4zM252 8h4v4h-4zM252 16h4v4h-4zM252 20h4v4h-4zM252 40h4v4h-4zM68 48h4v4h-4zM76 52h4v4h-4zM80 56h4v4h-4zM248 56h4v4h-4zM248 60h4v4h-4zM88 64h4v4h-4zM172 64h4v4h-4zM248 64h4v4h-4zM168 68h8v4h-8zM92 72h4v4h-4zM168 72h8v4h-8zM96 76h4v4h-4zM168 76h8v4h-8zM244 76h4v4h-4zM96 80h4v4h-4zM244 80h4v4h-4zM100 84h4v4h-4zM100 88h4v4h-4zM104 92h8v4h-8zM120 92h4v4h-4zM240 92h4v4h-4zM116 96h12v4h-12zM152 96h4v4h-4zM240 96h8v4h-8zM116 100h4v4h-4zM124 100h8v4h-8zM140 100h4v4h-4zM160 100h8v4h-8zM172 100h8v4h-8zM236 100h8v4h-8zM116 104h24v4h-24zM160 104h4v4h-4zM168 104h4v4h-4zM224 104h4v4h-4zM232 104h4v4h-4zM240 104h4v4h-4zM124 108h4v4h-4zM144 108h8v4h-8zM176 108h8v4h-8zM224 108h16v4h-16zM132 112h4v4h-4zM140 112h4v4h-4zM152 112h8v4h-8zM216 112h12v4h-12zM236 112h8v4h-8zM132 116h4v4h-4zM140 116h4v4h-4zM152 116h8v4h-8zM216 116h12v4h-12zM236 116h8v4h-8z"/>
<path fill="rgb(45,45,45)" d="M252 -4h4v4h-4zM252 0h4v4h-4zM252 4h4v4h-4zM68 28h4v4h-4zM68 32h4v4h-4zM68 36h4v4h-4zM68 40h4v4h-4zM68 44h4v4h-4zM72 48h4v4h-4zM248 48h4v4h-4zM248 52h4v4h-4zM84 60h4v4h-4zM172 60h4v4h-4zM164 64h8v4h-8zM176 64h4v4h-4zM92 68h4v4h-4zM120 68h4v4h-4zM164 68h4v4h-4zM176 68h4v4h-4zM244 68h4v4h-4zM176 72h4v4h-4zM244 72h4v4h-4zM176 76h4v4h-4zM240 76h4v4h-4zM100 80h4v4h-4zM168 80h12v4h-12zM104 84h8v4h-8zM168 84h4v4h-4zM176 84h12v4h-12zM244 84h4v4h-4zM104 88h8v4h-8zM124 88h4v4h-4zM164 88h8v4h-8zM176 88h12v4h-12zM192 88h4v4h-4zM112 92h8v4h-8zM124 92h8v4h-8zM156 92h4v4h-4zM180 92h8v4h-8zM236 92h4v4h-4zM128 96h4v4h-4zM148 96h4v4h-4zM156 96h12v4h-12zM180 96h12v4h-12zM236 96h4v4h-4zM132 100h8v4h-8zM168 100h4v4h-4zM180 100h8v4h-8zM216 100h4v4h-4zM224 100h12v4h-12zM180 104h8v4h-8zM216 104h8v4h-8zM184 108h4v4h-4zM208 108h16v4h-16zM144 112h8v4h-8zM188 112h4v4h-4zM208 112h8v4h-8zM144 116h8v4h-8zM188 116h4v4h-4zM208 116h8v4h-8z"/>
<path fill="rgb(51,51,51)" d="M68 24h4v4h-4zM248 28h4v4h-4zM248 32h4v4h-4zM248 44h4v4h-4zM80 52h4v4h-4zM84 56h4v4h-4zM172 56h4v4h-4zM88 60h4v4h-4zM160 60h12v4h-12zM176 60h4v4h-4zM92 64h4v4h-4zM120 64h4v4h-4zM160 64h4v4h-4zM244 64h4v4h-4zM156 68h8v4h-8zM184 68h4v4h-4zM96 72h4v4h-4zM104 72h4v4h-4zM120 72h4v4h-4zM136 72h4v4h-4zM160 72h8v4h-8zM240 72h4v4h-4zM100 76h4v4h-4zM112 76h4v4h-4zM132 76h8v4h-8zM164 76h4v4h-4zM180 76h4v4h-4zM104 80h8v4h-8zM136 80h4v4h-4zM160 80h8v4h-8zM180 80h12v4h-12zM240 80h4v4h-4zM152 84h16v4h-16zM172 84h4v4h-4zM188 84h8v4h-8zM240 84h4v4h-4zM116 88h8v4h-8zM128 88h4v4h-4zM152 88h12v4h-12zM172 88h4v4h-4zM188 88h4v4h-4zM196 88h4v4h-4zM232 88h12v4h-12zM132 92h24v4h-24zM160 92h20v4h-20zM188 92h16v4h-16zM232 92h4v4h-4zM132 96h16v4h-16zM168 96h4v4h-4zM176 96h4v4h-4zM192 96h12v4h-12zM224 96h12v4h-12zM188 100h12v4h-12zM212 100h4v4h-4zM220 100h4v4h-4zM188 104h16v4h-16zM208 104h8v4h-8zM188 108h20v4h-20zM196 112h4v4h-4zM204 112h4v4h-4zM196 116h4v4h-4zM204 116h4v4h-4z"/>
<path fill="rgb(57,57,57)" d="M68 -4h4v4h-4zM68 0h4v4h-4zM248 8h4v4h-4zM248 12h4v4h-4zM68 16h4v4h-4zM248 16h4v4h-4zM68 20h4v4h-4zM248 20h4v4h-4zM248 24h4v4h-4zM72 36h4v4h-4zM248 36h4v4h-4zM72 40h4v4h-4zM248 40h4v4h-4zM72 44h4v4h-4zM76 48h4v4h-4zM84 52h4v4h-4zM88 56h4v4h-4zM164 56h8v4h-8zM92 60h4v4h-4zM156 60h4v4h-4zM96 64h12v4h-12zM116 64h4v4h-4zM124 64h4v4h-4zM156 64h4v4h-4zM180 64h8v4h-8zM96 68h12v4h-12zM116 68h4v4h-4zM124 68h4v4h-4zM136 68h4v4h-4zM152 68h4v4h-4zM180 68h4v4h-4zM188 68h4v4h-4zM240 68h4v4h-4zM100 72h4v4h-4zM108 72h4v4h-4zM116 72h4v4h-4zM124 72h12v4h-12zM140 72h4v4h-4zM156 72h4v4h-4zM184 72h8v4h-8zM236 72h4v4h-4zM104 76h8v4h-8zM116 76h8v4h-8zM140 76h4v4h-4zM148 76h16v4h-16zM184 76h12v4h-12zM236 76h4v4h-4zM112 80h24v4h-24zM140 80h4v4h-4zM148 80h12v4h-12zM192 80h4v4h-4zM232 80h8v4h-8zM112 84h32v4h-32zM148 84h4v4h-4zM196 84h8v4h-8zM228 84h12v4h-12zM112 88h4v4h-4zM132 88h20v4h-20zM200 88h4v4h-4zM228 88h4v4h-4zM204 92h8v4h-8zM220 92h12v4h-12zM172 96h4v4h-4zM204 96h4v4h-4zM212 96h12v4h-12zM200 100h12v4h-12zM204 104h4v4h-4zM192 112h4v4h-4zM200 112h4v4h-4zM192 116h4v4h-4zM200 116h4v4h-4z"/>
<path fill="rgb(64,64,64)" d="M68 4h4v4h-4zM248 4h4v4h-4zM68 12h4v4h-4zM72 28h4v4h-4zM72 32h4v4h-4zM76 36h4v4h-4zM76 40h4v4h-4zM168 48h4v4h-4zM164 52h12v4h-12zM176 56h4v4h-4zM244 56h4v4h-4zM96 60h28v4h-28zM152 60h4v4h-4zM180 60h4v4h-4zM244 60h4v4h-4zM108 64h8v4h-8zM136 64h8v4h-8zM240 64h4v4h-4zM108 68h8v4h-8zM128 68h8v4h-8zM140 68h12v4h-12zM236 68h4v4h-4zM112 72h4v4h-4zM144 72h12v4h-12zM180 72h4v4h-4zM124 76h8v4h-8zM144 76h4v4h-4zM144 80h4v4h-4zM196 80h4v4h-4zM228 80h4v4h-4zM144 84h4v4h-4zM204 84h4v4h-4zM220 84h4v4h-4zM204 88h16v4h-16zM224 88h4v4h-4zM212 92h8v4h-8zM208 96h4v4h-4z"/>
<path fill="rgb(70,70,70)" d="M248 -4h4v4h-4zM248 0h4v4h-4zM68 8h4v4h-4zM244 8h4v4h-4zM244 12h4v4h-4zM72 24h4v4h-4zM244 28h4v4h-4zM76 32h4v4h-4zM80 36h4v4h-4zM160 40h8v4h-8zM76 44h4v4h-4zM168 44h4v4h-4zM244 44h4v4h-4zM80 48h8v4h-8zM164 48h4v4h-4zM172 48h4v4h-4zM180 48h8v4h-8zM88 52h4v4h-4zM176 52h4v4h-4zM244 52h4v4h-4zM92 56h4v4h-4zM100 56h4v4h-4zM140 56h8v4h-8zM152 56h4v4h-4zM160 56h4v4h-4zM124 60h4v4h-4zM140 60h12v4h-12zM184 60h4v4h-4zM128 64h8v4h-8zM144 64h12v4h-12zM188 64h4v4h-4zM228 68h4v4h-4zM192 72h4v4h-4zM228 72h8v4h-8zM224 76h12v4h-12zM200 80h4v4h-4zM220 80h8v4h-8zM216 84h4v4h-4zM224 84h4v4h-4zM220 88h4v4h-4z"/>
<path fill="rgb(76,76,76)" d="M72 16h4v4h-4zM244 16h4v4h-4zM72 20h4v4h-4zM244 20h4v4h-4zM76 24h4v4h-4zM244 24h4v4h-4zM76 28h4v4h-4zM244 32h4v4h-4zM164 36h8v4h-8zM244 36h4v4h-4zM80 40h4v4h-4zM168 40h8v4h-8zM244 40h4v4h-4zM84 44h8v4h-8zM160 44h8v4h-8zM172 44h8v4h-8zM88 48h4v4h-4zM160 48h4v4h-4zM176 48h4v4h-4zM244 48h4v4h-4zM136 52h8v4h-8zM156 52h8v4h-8zM180 52h8v4h-8zM96 56h4v4h-4zM104 56h4v4h-4zM128 56h4v4h-4zM148 56h4v4h-4zM156 56h4v4h-4zM180 56h4v4h-4zM188 56h4v4h-4zM128 60h12v4h-12zM188 60h4v4h-4zM240 60h4v4h-4zM228 64h4v4h-4zM192 68h4v4h-4zM208 68h4v4h-4zM224 68h4v4h-4zM232 68h4v4h-4zM196 72h4v4h-4zM204 72h4v4h-4zM224 72h4v4h-4zM196 76h4v4h-4zM220 76h4v4h-4zM204 80h8v4h-8zM216 80h4v4h-4zM208 84h8v4h-8z"/>
<path fill="rgb(83,83,83)" d="M72 -4h4v4h-4zM72 0h4v4h-4zM72 4h4v4h-4zM244 4h4v4h-4zM72 8h4v4h-4zM72 12h4v4h-4zM240 24h4v4h-4zM184 28h4v4h-4zM80 32h4v4h-4zM180 32h4v4h-4zM160 36h4v4h-4zM180 36h4v4h-4zM92 40h8v4h-8zM176 40h4v4h-4zM80 44h4v4h-4zM92 44h4v4h-4zM180 44h8v4h-8zM92 48h4v4h-4zM132 48h8v4h-8zM144 48h8v4h-8zM132 52h4v4h-4zM144 52h12v4h-12zM188 52h4v4h-4zM108 56h12v4h-12zM124 56h4v4h-4zM132 56h8v4h-8zM184 56h4v4h-4zM192 56h4v4h-4zM240 56h4v4h-4zM192 60h4v4h-4zM228 60h4v4h-4zM192 64h4v4h-4zM224 64h4v4h-4zM232 64h8v4h-8zM196 68h4v4h-4zM204 68h4v4h-4zM200 72h4v4h-4zM208 72h4v4h-4zM220 72h4v4h-4zM200 76h12v4h-12zM212 80h4v4h-4z"/>
<path fill="rgb(89,89,89)" d="M244 -4h4v4h-4zM244 0h4v4h-4zM76 16h4v4h-4zM76 20h4v4h-4zM184 24h4v4h-4zM180 28h4v4h-4zM240 28h4v4h-4zM164 32h4v4h-4zM184 32h4v4h-4zM84 36h4v4h-4zM92 36h8v4h-8zM172 36h8v4h-8zM84 40h8v4h-8zM100 40h4v4h-4zM156 40h4v4h-4zM180 40h4v4h-4zM96 44h4v4h-4zM132 44h8v4h-8zM144 44h8v4h-8zM156 44h4v4h-4zM188 44h4v4h-4zM140 48h4v4h-4zM152 48h8v4h-8zM188 48h4v4h-4zM92 52h12v4h-12zM124 52h8v4h-8zM192 52h4v4h-4zM236 52h8v4h-8zM120 56h4v4h-4zM196 56h4v4h-4zM232 56h8v4h-8zM224 60h4v4h-4zM232 60h8v4h-8zM208 64h12v4h-12zM200 68h4v4h-4zM212 68h4v4h-4zM220 68h4v4h-4zM212 72h8v4h-8zM212 76h8v4h-8z"/>
<path fill="rgb(96,96,96)" d="M168 -4h4v4h-4zM176 -4h4v4h-4zM188 -4h4v4h-4zM168 0h4v4h-4zM176 0h4v4h-4zM188 0h4v4h-4zM76 12h4v4h-4zM160 12h8v4h-8zM180 12h8v4h-8zM240 12h4v4h-4zM168 16h4v4h-4zM180 16h8v4h-8zM240 16h4v4h-4zM160 20h8v4h-8zM240 20h4v4h-4zM80 24h4v4h-4zM160 24h12v4h-12zM80 28h4v4h-4zM164 28h12v4h-12zM160 32h4v4h-4zM168 32h4v4h-4zM176 32h4v4h-4zM88 36h4v4h-4zM184 36h4v4h-4zM104 40h8v4h-8zM148 40h4v4h-4zM184 40h4v4h-4zM240 40h4v4h-4zM140 44h4v4h-4zM152 44h4v4h-4zM232 44h12v4h-12zM96 48h8v4h-8zM128 48h4v4h-4zM192 48h4v4h-4zM232 48h4v4h-4zM240 48h4v4h-4zM104 52h4v4h-4zM232 52h4v4h-4zM228 56h4v4h-4zM196 60h4v4h-4zM196 64h4v4h-4zM204 64h4v4h-4zM220 64h4v4h-4zM216 68h4v4h-4z"/>
<path fill="rgb(102,102,102)" d="M76 -4h4v4h-4zM172 -4h4v4h-4zM180 -4h8v4h-8zM192 -4h4v4h-4zM76 0h4v4h-4zM172 0h4v4h-4zM180 0h8v4h-8zM192 0h4v4h-4zM76 4h4v4h-4zM176 4h8v4h-8zM76 8h4v4h-4zM164 8h4v4h-4zM184 8h4v4h-4zM240 8h4v4h-4zM168 12h12v4h-12zM80 16h4v4h-4zM156 16h12v4h-12zM172 16h8v4h-8zM156 20h4v4h-4zM168 20h20v4h-20zM172 24h4v4h-4zM180 24h4v4h-4zM188 24h4v4h-4zM236 24h4v4h-4zM160 28h4v4h-4zM176 28h4v4h-4zM188 28h4v4h-4zM84 32h4v4h-4zM156 32h4v4h-4zM172 32h4v4h-4zM188 32h4v4h-4zM240 32h4v4h-4zM100 36h4v4h-4zM156 36h4v4h-4zM132 40h16v4h-16zM152 40h4v4h-4zM236 40h4v4h-4zM100 44h12v4h-12zM192 44h4v4h-4zM104 48h4v4h-4zM236 48h4v4h-4zM108 52h16v4h-16zM228 52h4v4h-4zM200 56h4v4h-4zM224 56h4v4h-4zM200 60h8v4h-8zM216 60h8v4h-8zM200 64h4v4h-4z"/>
<path fill="rgb(108,108,108)" d="M160 4h8v4h-8zM172 4h4v4h-4zM184 4h8v4h-8zM160 8h4v4h-4zM176 8h8v4h-8zM80 12h4v4h-4zM152 12h4v4h-4zM188 12h8v4h-8zM188 16h4v4h-4zM80 20h4v4h-4zM188 20h4v4h-4zM236 20h4v4h-4zM144 24h8v4h-8zM156 24h4v4h-4zM176 24h4v4h-4zM156 28h4v4h-4zM92 32h4v4h-4zM148 32h8v4h-8zM104 36h4v4h-4zM132 36h16v4h-16zM152 36h4v4h-4zM188 36h8v4h-8zM240 36h4v4h-4zM188 40h8v4h-8zM128 44h4v4h-4zM228 44h4v4h-4zM108 48h4v4h-4zM116 48h12v4h-12zM228 48h4v4h-4zM196 52h4v4h-4zM224 52h4v4h-4zM208 60h8v4h-8z"/>
<path fill="rgb(115,115,115)" d="M168 4h4v4h-4zM192 4h4v4h-4zM240 4h4v4h-4zM80 8h4v4h-4zM168 8h4v4h-4zM188 8h8v4h-8zM156 12h4v4h-4zM236 12h4v4h-4zM152 16h4v4h-4zM192 16h4v4h-4zM148 20h4v4h-4zM192 20h4v4h-4zM84 24h4v4h-4zM152 24h4v4h-4zM192 24h4v4h-4zM84 28h4v4h-4zM92 28h4v4h-4zM152 28h4v4h-4zM236 28h4v4h-4zM88 32h4v4h-4zM96 32h4v4h-4zM140 32h8v4h-8zM192 32h4v4h-4zM108 36h4v4h-4zM148 36h4v4h-4zM236 36h4v4h-4zM112 40h4v4h-4zM232 40h4v4h-4zM112 44h8v4h-8zM112 48h4v4h-4zM196 48h4v4h-4zM200 52h4v4h-4zM220 52h4v4h-4zM204 56h4v4h-4zM216 56h8v4h-8z"/>
<path fill="rgb(121,121,121)" d="M80 -4h4v4h-4zM148 -4h12v4h-12zM164 -4h4v4h-4zM240 -4h4v4h-4zM80 0h4v4h-4zM148 0h12v4h-12zM164 0h4v4h-4zM240 0h4v4h-4zM80 4h4v4h-4zM156 4h4v4h-4zM156 8h4v4h-4zM172 8h4v4h-4zM84 16h4v4h-4zM236 16h4v4h-4zM84 20h4v4h-4zM144 20h4v4h-4zM152 20h4v4h-4zM88 24h8v4h-8zM88 28h4v4h-4zM144 28h8v4h-8zM192 28h4v4h-4zM100 32h8v4h-8zM136 32h4v4h-4zM236 32h4v4h-4zM116 40h4v4h-4zM128 40h4v4h-4zM196 40h4v4h-4zM120 44h4v4h-4zM196 44h4v4h-4zM208 56h8v4h-8z"/>
<path fill="rgb(128,128,128)" d="M160 -4h4v4h-4zM196 -4h4v4h-4zM160 0h4v4h-4zM196 0h4v4h-4zM148 4h8v4h-8zM148 8h8v4h-8zM196 8h4v4h-4zM236 8h4v4h-4zM148 12h4v4h-4zM196 12h4v4h-4zM148 16h4v4h-4zM196 16h4v4h-4zM140 24h4v4h-4zM232 24h4v4h-4zM96 28h4v4h-4zM124 28h8v4h-8zM140 28h4v4h-4zM196 28h4v4h-4zM128 32h8v4h-8zM196 32h4v4h-4zM232 32h4v4h-4zM128 36h4v4h-4zM196 36h4v4h-4zM232 36h4v4h-4zM120 40h4v4h-4zM228 40h4v4h-4zM124 44h4v4h-4zM200 48h4v4h-4zM220 48h8v4h-8zM204 52h4v4h-4zM216 52h4v4h-4z"/>
<path fill="rgb(134,134,134)" d="M196 4h4v4h-4zM84 12h4v4h-4zM128 16h4v4h-4zM196 20h4v4h-4zM96 24h4v4h-4zM196 24h4v4h-4zM100 28h4v4h-4zM132 28h8v4h-8zM232 28h4v4h-4zM108 32h4v4h-4zM124 32h4v4h-4zM112 36h16v4h-16zM228 36h4v4h-4zM200 40h4v4h-4zM200 44h4v4h-4zM224 44h4v4h-4zM216 48h4v4h-4zM212 52h4v4h-4z"/>
<path fill="rgb(140,140,140)" d="M144 -4h4v4h-4zM144 0h4v4h-4zM200 8h4v4h-4zM232 8h4v4h-4zM132 12h4v4h-4zM200 12h4v4h-4zM88 16h4v4h-4zM124 16h4v4h-4zM144 16h4v4h-4zM88 20h4v4h-4zM124 20h8v4h-8zM140 20h4v4h-4zM204 20h4v4h-4zM232 20h4v4h-4zM100 24h4v4h-4zM124 24h8v4h-8zM136 24h4v4h-4zM112 32h12v4h-12zM124 40h4v4h-4zM204 40h4v4h-4zM224 40h4v4h-4zM204 44h4v4h-4zM212 44h12v4h-12zM204 48h4v4h-4zM212 48h4v4h-4zM208 52h4v4h-4z"/>
<path fill="rgb(147,147,147)" d="M200 -4h4v4h-4zM200 0h4v4h-4zM236 4h4v4h-4zM84 8h4v4h-4zM144 12h4v4h-4zM232 12h4v4h-4zM100 16h8v4h-8zM132 16h4v4h-4zM200 16h8v4h-8zM92 20h4v4h-4zM100 20h8v4h-8zM136 20h4v4h-4zM200 20h4v4h-4zM132 24h4v4h-4zM228 24h4v4h-4zM104 28h4v4h-4zM120 28h4v4h-4zM200 28h4v4h-4zM212 28h4v4h-4zM212 32h4v4h-4zM228 32h4v4h-4zM200 36h4v4h-4zM208 36h4v4h-4zM224 36h4v4h-4zM208 40h16v4h-16zM208 44h4v4h-4zM208 48h4v4h-4z"/>
<path fill="rgb(153,153,153)" d="M84 -4h4v4h-4zM212 -4h8v4h-8zM84 0h4v4h-4zM212 0h8v4h-8zM92 4h4v4h-4zM200 4h4v4h-4zM136 8h4v4h-4zM88 12h8v4h-8zM128 12h4v4h-4zM204 12h4v4h-4zM92 16h4v4h-4zM108 16h4v4h-4zM96 20h4v4h-4zM132 20h4v4h-4zM228 20h4v4h-4zM104 24h4v4h-4zM200 24h4v4h-4zM220 24h4v4h-4zM228 28h4v4h-4zM200 32h4v4h-4zM208 32h4v4h-4zM204 36h4v4h-4z"/>
<path fill="rgb(159,159,159)" d="M88 -4h8v4h-8zM136 -4h8v4h-8zM204 -4h4v4h-4zM220 -4h4v4h-4zM236 -4h4v4h-4zM88 0h8v4h-8zM136 0h8v4h-8zM204 0h4v4h-4zM220 0h4v4h-4zM236 0h4v4h-4zM84 4h8v4h-8zM144 4h4v4h-4zM232 4h4v4h-4zM88 8h8v4h-8zM132 8h4v4h-4zM144 8h4v4h-4zM96 12h4v4h-4zM136 12h8v4h-8zM96 16h4v4h-4zM140 16h4v4h-4zM232 16h4v4h-4zM208 20h4v4h-4zM224 20h4v4h-4zM120 24h4v4h-4zM204 24h8v4h-8zM216 24h4v4h-4zM224 24h4v4h-4zM108 28h4v4h-4zM116 28h4v4h-4zM208 28h4v4h-4zM216 28h4v4h-4zM212 36h4v4h-4zM220 36h4v4h-4z"/>
<path fill="rgb(166,166,166)" d="M136 4h8v4h-8zM220 4h4v4h-4zM96 8h4v4h-4zM140 8h4v4h-4zM204 8h4v4h-4zM228 8h4v4h-4zM100 12h8v4h-8zM112 16h4v4h-4zM120 16h4v4h-4zM136 16h4v4h-4zM208 16h4v4h-4zM228 16h4v4h-4zM108 20h4v4h-4zM120 20h4v4h-4zM220 20h4v4h-4zM212 24h4v4h-4zM112 28h4v4h-4zM204 32h4v4h-4zM224 32h4v4h-4zM216 36h4v4h-4z"/>
<path fill="rgb(172,172,172)" d="M208 -4h4v4h-4zM208 0h4v4h-4zM204 4h4v4h-4zM212 4h8v4h-8zM224 4h4v4h-4zM108 12h8v4h-8zM208 12h4v4h-4zM224 16h4v4h-4zM112 20h8v4h-8zM108 24h4v4h-4zM116 24h4v4h-4zM224 28h4v4h-4zM216 32h4v4h-4z"/>
<path fill="rgb(178,178,178)" d="M104 -4h4v4h-4zM224 -4h4v4h-4zM104 0h4v4h-4zM224 0h4v4h-4zM228 4h4v4h-4zM100 8h4v4h-4zM224 8h4v4h-4zM228 12h4v4h-4zM116 16h4v4h-4zM220 16h4v4h-4zM112 24h4v4h-4zM204 28h4v4h-4zM220 28h4v4h-4zM220 32h4v4h-4z"/>
<path fill="rgb(185,185,185)" d="M132 -4h4v4h-4zM132 0h4v4h-4zM96 4h4v4h-4zM104 4h4v4h-4zM132 4h4v4h-4zM208 4h4v4h-4zM104 8h4v4h-4zM116 8h4v4h-4zM128 8h4v4h-4zM208 8h8v4h-8zM220 8h4v4h-4zM116 12h12v4h-12zM212 12h4v4h-4zM220 12h8v4h-8zM212 20h8v4h-8z"/>
<path fill="rgb(191,191,191)" d="M96 -4h8v4h-8zM228 -4h8v4h-8zM96 0h8v4h-8zM228 0h8v4h-8zM100 4h4v4h-4zM116 4h8v4h-8zM120 8h4v4h-4zM216 8h4v4h-4zM216 12h4v4h-4zM212 16h8v4h-8z"/>
<path fill="rgb(198,198,198)" d="M108 -4h4v4h-4zM108 0h4v4h-4zM128 4h4v4h-4zM112 8h4v4h-4z"/>
<path fill="rgb(204,204,204)" d="M120 -4h4v4h-4zM120 0h4v4h-4zM108 4h4v4h-4zM108 8h4v4h-4z"/>
<path fill="rgb(210,210,210)" d="M112 -4h8v4h-8zM124 -4h8v4h-8zM112 0h8v4h-8zM124 0h8v4h-8zM112 4h4v4h-4zM124 4h4v4h-4zM124 8h4v4h-4z"/>
</g>
<path d="M179.2 115.5L173.5 107.1L162.5 105.6L158.5 102.4L154.5 101.1L138.5 107.2L131.5 108.2L126.5 111.6L118.7 105.5L114.6 98.5L103 93.5L96.7 80.5L89.5 68.5L69.4 48.5L65.4 11.5L65.8 0.5" fill="none" stroke="#141414" stroke-width="1"/>
<path d="M255.5 0.5L253.1 31.5L253.8 42.5L251.2 63.5L247.9 75.5L247.6 85.5L245.1 97.5L241.1 107.5L243.9 112.5L244.4 115.5" fill="none" stroke="#141414" stroke-width="1"/>
<path d="M134.3 115.5L138.5 114.2L144.5 108.5L147.5 107.6L156.5 112.5L158.4 115.5" fill="none" stroke="#141414" stroke-width="1"/>
<path d="M252.6 0.5L250.8 13.5L251.2 22.5L250.1 31.5L250.6 42.5L247.6 62.5L241.3 75.5L240.2 86.5L235.5 90.9L231.5 96.7L222.5 100.5L216.3 101.5L205.5 108.3L201.5 109.5L199.6 103.5L200.6 95.5L198.7 90.5L194.5 86.2L182.2 80.5L180.4 75.5L179.4 65.5L177.5 62.5L174.5 60.5L170.5 60.9L162.5 65.2L161.5 69.5L163.7 77.5L161.8 85.5L160.3 87.5L150.5 93.3L146.5 94.2L141.5 93.7L135.5 96L130.9 91.5L126.5 88.8L123.5 88.5L116.5 90.1L114.2 89.5L110.5 83.6L104.5 79.9L97.5 72.5L92.5 63.3L73.3 46.5L68.1 10.5L68.9 0.5" fill="none" stroke="#141414" stroke-width="1"/>
<path d="M193.2 115.5L194.5 111.1L200.5 109.2L202.5 110.2L204.6 115.5" fill="none" stroke="#141414" stroke-width="1"/>
<path d="M249.1 0.5L246.3 12.5L246.7 39.5L245.4 53.5L243.5 60.6L239.5 66.4L229.5 72.9L222.6 81.5L213.5 86.1L210.5 85.6L198.5 78.8L189.5 63.8L183.1 58.5L178.5 51.6L170.5 46.4L167.5 47.6L162.3 54.5L159.5 56.7L153.5 58.2L149.5 60.5L143.5 58.8L139.3 62.5L135.5 64.1L132.5 64L125.5 61.2L109.5 60.4L94.5 57.3L87.5 49.9L82.5 47.8L80.6 45.5L81.3 38.5L74.2 22.5L71.9 11.5L72.6 0.5" fill="none" stroke="#141414" stroke-width="1"/>
<path d="M245.1 0.5L239.8 25.5L242.5 35.5L241.5 40.7L236.5 46.5L233.1 52.5L225.1 60.5L220.5 63.6L215.5 64.3L201.5 63.5L198.8 57.5L191.9 46.5L186.7 40.5L188.8 30.5L188.2 27.5L186.5 25.3L183.5 25.3L177.5 31.9L175.5 32.5L170.5 24.6L167.5 22.2L164.5 23.4L163.2 30.5L153.5 42.8L141.5 44.2L136.5 43.7L133.5 45.5L128.5 50.8L123.5 53.3L114.5 54.5L109.5 53.6L103.4 48.5L106.2 43.5L105.5 41.5L98.5 37.2L88.5 36.4L84.5 32L80.4 21.5L77.8 10.5L77.4 0.5" fill="none" stroke="#141414" stroke-width="1"/>
<path d="M152.8 0.5L154.6 4.5L154.8 7.5L150.3 18.5L144.5 24.3L141.3 30.5L138.5 32.5L131.5 35L128.3 42.5L124.5 44.8L115.5 40.4L109 35.5L99.9 31.5L94.5 27L88.5 23.7L82.9 9.5L82.3 0.5" fill="none" stroke="#141414" stroke-width="1"/>
<path d="M241.5 0.5L240.7 5.5L237.5 12.5L237.2 18.5L235.2 24.5L235.8 33.5L235 36.5L225.5 49.2L216.5 55.6L212.5 56.8L207.5 55.5L202.7 51.5L200.4 47.5L197.8 39.5L195.9 24.5L197.5 0.5" fill="none" stroke="#141414" stroke-width="1"/>
<path d="M149.2 0.5L151 7.5L148.7 17.5L138.5 29.7L129 31.5L126.8 40.5L124.5 41.9L103.5 31.5L89.9 22.5L84 9.5L83.4 0.5" fill="none" stroke="#141414" stroke-width="1"/>
<path d="M240.7 0.5L239.7 5.5L236.6 11.5L236.2 18.5L233.8 25.5L234 32.5L232.7 36.5L224.5 47.2L214.5 53.9L211.5 54.8L207.5 53.6L204.2 50.5L199.1 37.5L197.6 25.5L198.9 13.5L198.2 6.5L198.9 0.5" fill="none" stroke="#141414" stroke-width="1"/>
<path d="M137.2 0.5L136.1 6.5L128.5 13.1L121.7 17.5L118 25.5L114.5 27.2L112.2 25.5L114.1 19.5L113.3 16.5L102.5 12.2L98.6 9.5L95.8 5.5L94.9 0.5" fill="none" stroke="#141414" stroke-width="1"/>
<path d="M235.8 0.5L234.7 3.5L229.8 8.5L229.9 14.5L228.5 17.1L219.5 23.3L216.5 24.2L213.5 23.6L211.8 21.5L207.2 9.5L207.2 5.5L208.5 3.8L210.5 3.2L215.5 5.4L222.5 5.5L223.5 4.5L224 0.5" fill="none" stroke="#141414" stroke-width="1"/>
<defs><clipPath id="roic"><path d="M212 -3 L211 12 C211 19 215 22.5 220 22.5 C226 22.5 229.5 17 230.5 10 L231 -3Z"/></clipPath></defs>
<path d="M212 -3 L211 12 C211 19 215 22.5 220 22.5 C226 22.5 229.5 17 230.5 10 L231 -3Z" fill="#9a9a9a"/>
<g clip-path="url(#roic)" stroke="#22b040" stroke-width="1"><line x1="190" y1="-5" x2="210" y2="25"/><line x1="197" y1="-5" x2="217" y2="25"/><line x1="204" y1="-5" x2="224" y2="25"/><line x1="211" y1="-5" x2="231" y2="25"/><line x1="218" y1="-5" x2="238" y2="25"/><line x1="225" y1="-5" x2="245" y2="25"/><line x1="232" y1="-5" x2="252" y2="25"/><line x1="239" y1="-5" x2="259" y2="25"/></g>
<path d="M212 -3 L211 12 C211 19 215 22.5 220 22.5 C226 22.5 229.5 17 230.5 10 L231 -3" fill="none" stroke="#000" stroke-width="5"/>
<path d="M212 -3 L211 12 C211 19 215 22.5 220 22.5 C226 22.5 229.5 17 230.5 10 L231 -3" fill="none" stroke="#22b040" stroke-width="3"/>
</svg>
<path d="M432.4 0L433.5 1.7L439 4.4L420.3 8.3L418.6 11.1L421.4 12.7L426.9 14.4L412.5 19.9L414.7 23.2L399.2 28.2L399.8 33.2L382.7 42L387.6 43.7L387.6 47.6L385.8 50L381.4 54L375.6 54.8L374.8 58.3L375.2 68.5L370.4 71.5L369.1 75.5L371.3 80.3L369.1 83L367.3 88.2L370.8 93.5L364.2 100.1L365.1 109.8L362.5 111.5L362.5 113.5L367.3 113.5L367.3 111.5" fill="none" stroke="#000" stroke-width="2" stroke-linejoin="miter"/>
<path d="M486 215L545 215L550.6 214.3L554.8 212.2L559 210.8L563.2 208L566 203.1L568.1 198.9L573.7 191.2L576.5 179.3L580.7 170.9L582.8 159.8L584.2 150L587 153.5L590.5 139.5L594 133.9L597.4 136L603.7 126.9L607.2 133.9L610.7 124.1L614.2 136L618.4 131.8L622.6 136L626.1 142.3L631 159.8L634.5 159.8L638 170.9L641.5 172.3L646.4 179.3L652 189.8L654.8 191.2L662.1 191.2L664.9 196.1L667.7 194L670.5 194.7L676.1 195L678.2 197.5L681.7 191.2L685.9 189.1L688.7 184.2L694.3 177.2L699.9 176.5L702 167.4L704.8 166.7L710.3 172.3L715.2 185.6L720.1 186.3L728.5 198.2L735.5 209.4L739.7 210.1L743.2 212.9L753.7 213.2L780 214.3L819.5 214.6" fill="none" stroke="#000" stroke-width="2"/>
<g shape-rendering="crispEdges" stroke="#000">
<line x1="353.5" y1="0" x2="353.5" y2="223" stroke-width="1"/>
<line x1="353" y1="222.5" x2="820" y2="222.5" stroke-width="1"/>
<line x1="353" y1="115" x2="820" y2="115" stroke-width="2"/>
<line x1="486" y1="115" x2="486" y2="223" stroke-width="2"/>
<line x1="819.5" y1="115" x2="819.5" y2="223" stroke-width="1"/>
<line x1="353.5" y1="112.1" x2="355.5" y2="112.1"/>
<line x1="353.5" y1="107.6" x2="355.5" y2="107.6"/>
<line x1="353.5" y1="103.1" x2="355.5" y2="103.1"/>
<line x1="353.5" y1="98.6" x2="355.5" y2="98.6"/>
<line x1="353.5" y1="94.1" x2="357.5" y2="94.1"/>
<line x1="353.5" y1="89.6" x2="355.5" y2="89.6"/>
<line x1="353.5" y1="85.1" x2="355.5" y2="85.1"/>
<line x1="353.5" y1="80.6" x2="355.5" y2="80.6"/>
<line x1="353.5" y1="76.1" x2="355.5" y2="76.1"/>
<line x1="353.5" y1="71.6" x2="357.5" y2="71.6"/>
<line x1="353.5" y1="67.1" x2="355.5" y2="67.1"/>
<line x1="353.5" y1="62.6" x2="355.5" y2="62.6"/>
<line x1="353.5" y1="58.1" x2="355.5" y2="58.1"/>
<line x1="353.5" y1="53.6" x2="355.5" y2="53.6"/>
<line x1="353.5" y1="49.1" x2="357.5" y2="49.1"/>
<line x1="353.5" y1="44.6" x2="355.5" y2="44.6"/>
<line x1="353.5" y1="40.2" x2="355.5" y2="40.2"/>
<line x1="353.5" y1="35.7" x2="355.5" y2="35.7"/>
<line x1="353.5" y1="31.2" x2="355.5" y2="31.2"/>
<line x1="353.5" y1="26.7" x2="357.5" y2="26.7"/>
<line x1="353.5" y1="22.2" x2="355.5" y2="22.2"/>
<line x1="353.5" y1="17.7" x2="355.5" y2="17.7"/>
<line x1="353.5" y1="13.2" x2="355.5" y2="13.2"/>
<line x1="353.5" y1="8.7" x2="355.5" y2="8.7"/>
<line x1="353.5" y1="4.2" x2="357.5" y2="4.2"/>
<line x1="353.5" y1="215.3" x2="357.5" y2="215.3"/>
<line x1="486" y1="215.3" x2="491" y2="215.3"/>
<line x1="486" y1="215.3" x2="481" y2="215.3"/>
<line x1="819.5" y1="215.3" x2="815.5" y2="215.3"/>
<line x1="353.5" y1="204.8" x2="355.5" y2="204.8"/>
<line x1="486" y1="204.8" x2="489" y2="204.8"/>
<line x1="486" y1="204.8" x2="483" y2="204.8"/>
<line x1="819.5" y1="204.8" x2="817.5" y2="204.8"/>
<line x1="353.5" y1="194.3" x2="355.5" y2="194.3"/>
<line x1="486" y1="194.3" x2="489" y2="194.3"/>
<line x1="486" y1="194.3" x2="483" y2="194.3"/>
<line x1="819.5" y1="194.3" x2="817.5" y2="194.3"/>
<line x1="353.5" y1="183.8" x2="355.5" y2="183.8"/>
<line x1="486" y1="183.8" x2="489" y2="183.8"/>
<line x1="486" y1="183.8" x2="483" y2="183.8"/>
<line x1="819.5" y1="183.8" x2="817.5" y2="183.8"/>
<line x1="353.5" y1="173.3" x2="357.5" y2="173.3"/>
<line x1="486" y1="173.3" x2="491" y2="173.3"/>
<line x1="486" y1="173.3" x2="481" y2="173.3"/>
<line x1="819.5" y1="173.3" x2="815.5" y2="173.3"/>
<line x1="353.5" y1="162.9" x2="355.5" y2="162.9"/>
<line x1="486" y1="162.9" x2="489" y2="162.9"/>
<line x1="486" y1="162.9" x2="483" y2="162.9"/>
<line x1="819.5" y1="162.9" x2="817.5" y2="162.9"/>
<line x1="353.5" y1="152.4" x2="355.5" y2="152.4"/>
<line x1="486" y1="152.4" x2="489" y2="152.4"/>
<line x1="486" y1="152.4" x2="483" y2="152.4"/>
<line x1="819.5" y1="152.4" x2="817.5" y2="152.4"/>
<line x1="353.5" y1="141.9" x2="355.5" y2="141.9"/>
<line x1="486" y1="141.9" x2="489" y2="141.9"/>
<line x1="486" y1="141.9" x2="483" y2="141.9"/>
<line x1="819.5" y1="141.9" x2="817.5" y2="141.9"/>
<line x1="353.5" y1="131.4" x2="357.5" y2="131.4"/>
<line x1="486" y1="131.4" x2="491" y2="131.4"/>
<line x1="486" y1="131.4" x2="481" y2="131.4"/>
<line x1="819.5" y1="131.4" x2="815.5" y2="131.4"/>
<line x1="353.5" y1="120.9" x2="355.5" y2="120.9"/>
<line x1="486" y1="120.9" x2="489" y2="120.9"/>
<line x1="486" y1="120.9" x2="483" y2="120.9"/>
<line x1="819.5" y1="120.9" x2="817.5" y2="120.9"/>
<line x1="361.5" y1="222.5" x2="361.5" y2="218.5"/>
<line x1="361.5" y1="115" x2="361.5" y2="120"/>
<line x1="381" y1="222.5" x2="381" y2="220.5"/>
<line x1="381" y1="115" x2="381" y2="118"/>
<line x1="400.4" y1="222.5" x2="400.4" y2="220.5"/>
<line x1="400.4" y1="115" x2="400.4" y2="118"/>
<line x1="419.9" y1="222.5" x2="419.9" y2="220.5"/>
<line x1="419.9" y1="115" x2="419.9" y2="118"/>
<line x1="439.4" y1="222.5" x2="439.4" y2="218.5"/>
<line x1="439.4" y1="115" x2="439.4" y2="120"/>
<line x1="458.9" y1="222.5" x2="458.9" y2="220.5"/>
<line x1="458.9" y1="115" x2="458.9" y2="118"/>
<line x1="478.4" y1="222.5" x2="478.4" y2="220.5"/>
<line x1="478.4" y1="115" x2="478.4" y2="118"/>
<line x1="489.6" y1="222.5" x2="489.6" y2="220.5"/>
<line x1="489.6" y1="115" x2="489.6" y2="118"/>
<line x1="501.7" y1="222.5" x2="501.7" y2="220.5"/>
<line x1="501.7" y1="115" x2="501.7" y2="118"/>
<line x1="513.7" y1="222.5" x2="513.7" y2="218.5"/>
<line x1="513.7" y1="115" x2="513.7" y2="120"/>
<line x1="525.7" y1="222.5" x2="525.7" y2="220.5"/>
<line x1="525.7" y1="115" x2="525.7" y2="118"/>
<line x1="537.8" y1="222.5" x2="537.8" y2="220.5"/>
<line x1="537.8" y1="115" x2="537.8" y2="118"/>
<line x1="549.8" y1="222.5" x2="549.8" y2="220.5"/>
<line x1="549.8" y1="115" x2="549.8" y2="118"/>
<line x1="561.8" y1="222.5" x2="561.8" y2="218.5"/>
<line x1="561.8" y1="115" x2="561.8" y2="120"/>
<line x1="573.9" y1="222.5" x2="573.9" y2="220.5"/>
<line x1="573.9" y1="115" x2="573.9" y2="118"/>
<line x1="585.9" y1="222.5" x2="585.9" y2="220.5"/>
<line x1="585.9" y1="115" x2="585.9" y2="118"/>
<line x1="597.9" y1="222.5" x2="597.9" y2="220.5"/>
<line x1="597.9" y1="115" x2="597.9" y2="118"/>
<line x1="609.9" y1="222.5" x2="609.9" y2="218.5"/>
<line x1="609.9" y1="115" x2="609.9" y2="120"/>
<line x1="622" y1="222.5" x2="622" y2="220.5"/>
<line x1="622" y1="115" x2="622" y2="118"/>
<line x1="634" y1="222.5" x2="634" y2="220.5"/>
<line x1="634" y1="115" x2="634" y2="118"/>
<line x1="646" y1="222.5" x2="646" y2="220.5"/>
<line x1="646" y1="115" x2="646" y2="118"/>
<line x1="658.1" y1="222.5" x2="658.1" y2="218.5"/>
<line x1="658.1" y1="115" x2="658.1" y2="120"/>
<line x1="670.1" y1="222.5" x2="670.1" y2="220.5"/>
<line x1="670.1" y1="115" x2="670.1" y2="118"/>
<line x1="682.1" y1="222.5" x2="682.1" y2="220.5"/>
<line x1="682.1" y1="115" x2="682.1" y2="118"/>
<line x1="694.2" y1="222.5" x2="694.2" y2="220.5"/>
<line x1="694.2" y1="115" x2="694.2" y2="118"/>
<line x1="706.2" y1="222.5" x2="706.2" y2="218.5"/>
<line x1="706.2" y1="115" x2="706.2" y2="120"/>
<line x1="718.2" y1="222.5" x2="718.2" y2="220.5"/>
<line x1="718.2" y1="115" x2="718.2" y2="118"/>
<line x1="730.2" y1="222.5" x2="730.2" y2="220.5"/>
<line x1="730.2" y1="115" x2="730.2" y2="118"/>
<line x1="742.3" y1="222.5" x2="742.3" y2="220.5"/>
<line x1="742.3" y1="115" x2="742.3" y2="118"/>
<line x1="754.3" y1="222.5" x2="754.3" y2="218.5"/>
<line x1="754.3" y1="115" x2="754.3" y2="120"/>
<line x1="766.3" y1="222.5" x2="766.3" y2="220.5"/>
<line x1="766.3" y1="115" x2="766.3" y2="118"/>
<line x1="778.4" y1="222.5" x2="778.4" y2="220.5"/>
<line x1="778.4" y1="115" x2="778.4" y2="118"/>
<line x1="790.4" y1="222.5" x2="790.4" y2="220.5"/>
<line x1="790.4" y1="115" x2="790.4" y2="118"/>
<line x1="802.4" y1="222.5" x2="802.4" y2="218.5"/>
<line x1="802.4" y1="115" x2="802.4" y2="120"/>
<line x1="814.5" y1="222.5" x2="814.5" y2="220.5"/>
<line x1="814.5" y1="115" x2="814.5" y2="118"/>
</g>
<text x="350.5" y="8.7" font-size="12.3" text-anchor="end">0.85</text>
<text x="350.5" y="31.2" font-size="12.3" text-anchor="end">0.80</text>
<text x="350.5" y="53.6" font-size="12.3" text-anchor="end">0.75</text>
<text x="350.5" y="76.1" font-size="12.3" text-anchor="end">0.70</text>
<text x="350.5" y="98.6" font-size="12.3" text-anchor="end">0.65</text>
<text x="350.5" y="219.8" font-size="12.3" text-anchor="end">0.0</text>
<text x="350.5" y="177.8" font-size="12.3" text-anchor="end">0.4</text>
<text x="350.5" y="135.9" font-size="12.3" text-anchor="end">0.8</text>
<text x="361.5" y="235.5" font-size="12.3" text-anchor="middle">0.0</text>
<text x="439.4" y="235.5" font-size="12.3" text-anchor="middle">0.4</text>
<text x="513.7" y="235.5" font-size="12.3" text-anchor="middle">1.4</text>
<text x="561.8" y="235.5" font-size="12.3" text-anchor="middle">1.6</text>
<text x="609.9" y="235.5" font-size="12.3" text-anchor="middle">1.8</text>
<text x="658.1" y="235.5" font-size="12.3" text-anchor="middle">2.0</text>
<text x="706.2" y="235.5" font-size="12.3" text-anchor="middle">2.2</text>
<text x="754.3" y="235.5" font-size="12.3" text-anchor="middle">2.4</text>
<text x="802.4" y="235.5" font-size="12.3" text-anchor="middle">2.6</text>
<text x="363" y="254" font-size="13">Occur. [10<tspan font-size="8.5" dy="-5">6</tspan><tspan dy="5"> Events]</tspan></text>
<text x="620.5" y="254" font-size="13">tau_Av [ns]</text>
<defs><clipPath id="ylc"><rect x="296" y="116" width="40" height="107"/></clipPath></defs>
<g clip-path="url(#ylc)"><text transform="translate(317.5 225) rotate(-90)" font-size="12.3">Occur. [10 <tspan font-size="8" dy="-4">6</tspan><tspan dy="4"> Events]</tspan></text></g>
<text transform="translate(318 21.5) rotate(-90)" font-size="12.3">Delta</text>
</svg>
<svg style="position:absolute;left:0;top:0" width="300" height="120"><ellipse cx="144.5" cy="80" rx="142.5" ry="28" fill="none" stroke="#e8141c" stroke-width="3"/></svg></body></html>
